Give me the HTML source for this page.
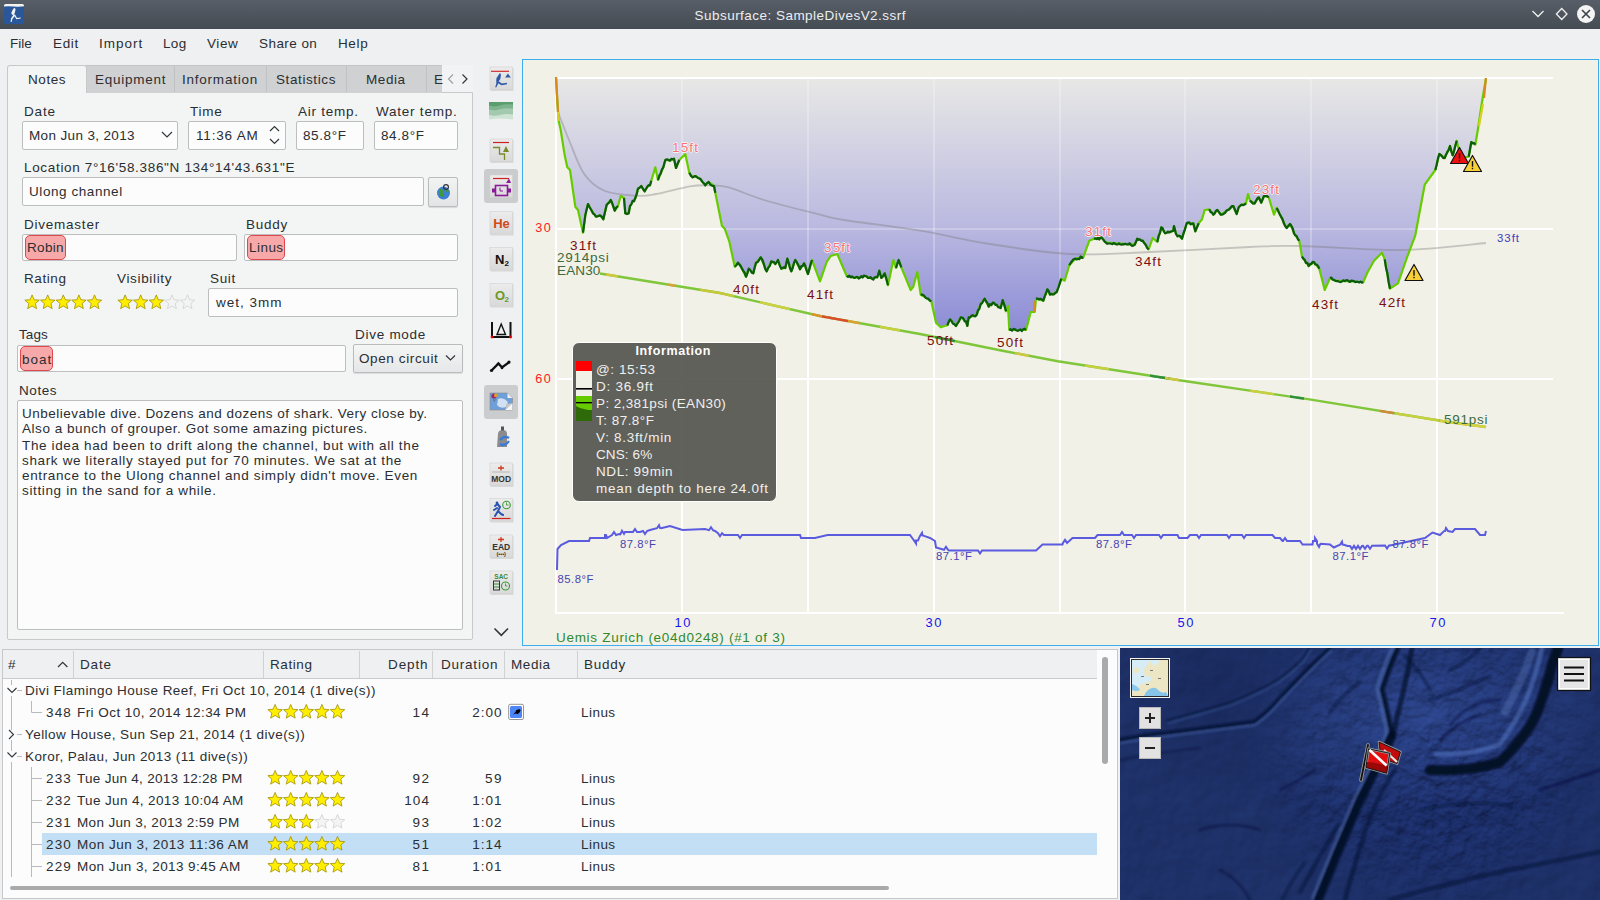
<!DOCTYPE html>
<html><head><meta charset="utf-8">
<style>
html,body{margin:0;padding:0;}
body{width:1600px;height:900px;overflow:hidden;position:relative;background:#eff0f1;font-family:"Liberation Sans",sans-serif;}
.t{position:absolute;white-space:nowrap;line-height:1;}
.b{position:absolute;box-sizing:border-box;}
svg{position:absolute;}
</style></head><body>
<div class="b" style="left:0px;top:0px;width:1600px;height:29px;background:linear-gradient(#575e67,#454b53);"></div>
<svg style="left:3px;top:3px" width="22" height="22" viewBox="3 3 22 22">
<rect x="4" y="4" width="20" height="20" rx="1.5" fill="#2a5799"/>
<path d="M4 5.5 Q4 4 5.5 4 H22.5 Q24 4 24 5.5 V6.2 Q20 7 14 6.5 Q8 6 4 6.5Z" fill="#f2f2ee"/>
<path d="M14.2 8 Q15.6 8 15.5 9.6 L15 12 Q14.5 14 13.5 15 L12.2 14.8 Q11 14 11.5 12.5 Q12.5 10 13.6 8.6Z" fill="#f4f4f4"/>
<path d="M13.6 14.6 L11 18.5 L10.6 22 L11.6 22 L12.4 19 L14.6 16.2 L16.4 19.3 L20.8 18.6 L20.6 17.6 L17 18 L15 14.6Z" fill="#f4f4f4"/>
</svg><div class="t" style="left:800.00px;top:8.57px;font-size:13.5px;color:#eceeef;letter-spacing:0.468px;transform:translateX(calc(-50% + 0.23px));">Subsurface: SampleDivesV2.ssrf</div>
<svg style="left:1525px;top:2px" width="75" height="26" viewBox="1525 2 75 26">
<path d="M1532.5 11 L1538 16.5 L1543.5 11" stroke="#f0f0f0" stroke-width="1.3" fill="none"/>
<path d="M1561.7 8.5 L1567 14 L1561.7 19.5 L1556.4 14 Z" stroke="#f0f0f0" stroke-width="1.3" fill="none"/>
<circle cx="1586" cy="14" r="9" fill="#f4f4f4"/>
<path d="M1582 10 L1590 18 M1590 10 L1582 18" stroke="#3a4048" stroke-width="1.6"/>
</svg><div class="t" style="left:10.00px;top:36.57px;font-size:13.5px;color:#2a2e32;letter-spacing:0.0px;">File</div>
<div class="t" style="left:53.00px;top:36.57px;font-size:13.5px;color:#2a2e32;letter-spacing:0.638px;">Edit</div>
<div class="t" style="left:99.00px;top:36.57px;font-size:13.5px;color:#2a2e32;letter-spacing:0.978px;">Import</div>
<div class="t" style="left:163.00px;top:36.57px;font-size:13.5px;color:#2a2e32;letter-spacing:0.351px;">Log</div>
<div class="t" style="left:207.00px;top:36.57px;font-size:13.5px;color:#2a2e32;letter-spacing:0.611px;">View</div>
<div class="t" style="left:259.00px;top:36.57px;font-size:13.5px;color:#2a2e32;letter-spacing:0.436px;">Share on</div>
<div class="t" style="left:338.00px;top:36.57px;font-size:13.5px;color:#2a2e32;letter-spacing:0.625px;">Help</div>
<div class="b" style="left:7px;top:92px;width:466px;height:548px;background:#f3f4f4;border:1px solid #c6c8c9;border-radius:0 0 2px 2px;"></div>
<div class="b" style="left:86px;top:65px;width:356px;height:28px;background:#d0d1d3;border-top:1px solid #c2c4c6;"></div>
<div class="b" style="left:174px;top:66px;width:1px;height:26px;background:#bfc1c3;"></div>
<div class="b" style="left:266px;top:66px;width:1px;height:26px;background:#bfc1c3;"></div>
<div class="b" style="left:346px;top:66px;width:1px;height:26px;background:#bfc1c3;"></div>
<div class="b" style="left:426px;top:66px;width:1px;height:26px;background:#bfc1c3;"></div>
<div class="b" style="left:442px;top:65px;width:31px;height:27px;background:#f2f3f4;"></div>
<div class="b" style="left:7px;top:65px;width:80px;height:28px;background:#f3f4f4;border:1px solid #c6c8c9;border-bottom:none;border-radius:3px 3px 0 0;"></div>
<div class="t" style="left:28.00px;top:72.57px;font-size:13.5px;color:#2a2e32;letter-spacing:0.571px;">Notes</div>
<div class="t" style="left:95.00px;top:72.57px;font-size:13.5px;color:#2a2e32;letter-spacing:0.754px;">Equipment</div>
<div class="t" style="left:182.00px;top:72.57px;font-size:13.5px;color:#2a2e32;letter-spacing:0.772px;">Information</div>
<div class="t" style="left:276.00px;top:72.57px;font-size:13.5px;color:#2a2e32;letter-spacing:0.601px;">Statistics</div>
<div class="t" style="left:366.00px;top:72.57px;font-size:13.5px;color:#2a2e32;letter-spacing:0.57px;">Media</div>
<div class="t" style="left:434.00px;top:72.57px;font-size:13.5px;color:#2a2e32;letter-spacing:-0.791px;">E</div>
<svg style="left:440px;top:68px" width="32" height="22" viewBox="440 68 32 22">
<path d="M453 74.5 L448.5 79 L453 83.5" stroke="#9ea1a4" stroke-width="1.2" fill="none"/>
<path d="M462.5 74.5 L467 79 L462.5 83.5" stroke="#31363b" stroke-width="1.2" fill="none"/>
</svg><div class="t" style="left:24.00px;top:104.57px;font-size:13.5px;color:#2a2e32;letter-spacing:0.852px;">Date</div>
<div class="t" style="left:190.00px;top:104.57px;font-size:13.5px;color:#2a2e32;letter-spacing:0.772px;">Time</div>
<div class="t" style="left:298.00px;top:104.57px;font-size:13.5px;color:#2a2e32;letter-spacing:0.764px;">Air temp.</div>
<div class="t" style="left:376.00px;top:104.57px;font-size:13.5px;color:#2a2e32;letter-spacing:0.769px;">Water temp.</div>
<div class="b" style="left:22px;top:121px;width:156px;height:29px;background:#fcfcfc;border:1px solid #bcbebf;border-radius:2px;"></div>
<div class="t" style="left:29.00px;top:128.57px;font-size:13.5px;color:#2a2e32;letter-spacing:0.36px;">Mon Jun 3, 2013</div>
<svg style="left:160px;top:128px" width="14" height="12" viewBox="160 128 14 12"><path d="M162 132 L167 137 L172 132" stroke="#31363b" stroke-width="1.2" fill="none"/></svg><div class="b" style="left:188px;top:121px;width:98px;height:29px;background:#fcfcfc;border:1px solid #bcbebf;border-radius:2px;"></div>
<div class="t" style="left:196.00px;top:128.57px;font-size:13.5px;color:#2a2e32;letter-spacing:0.81px;">11:36 AM</div>
<svg style="left:266px;top:124px" width="16" height="24" viewBox="266 124 16 24"><path d="M270 131 L274.5 126.5 L279 131 M270 139 L274.5 143.5 L279 139" stroke="#31363b" stroke-width="1.2" fill="none"/></svg><div class="b" style="left:296px;top:121px;width:68px;height:29px;background:#fcfcfc;border:1px solid #bcbebf;border-radius:2px;"></div>
<div class="t" style="left:303.00px;top:128.57px;font-size:13.5px;color:#2a2e32;letter-spacing:0.601px;">85.8°F</div>
<div class="b" style="left:374px;top:121px;width:84px;height:29px;background:#fcfcfc;border:1px solid #bcbebf;border-radius:2px;"></div>
<div class="t" style="left:381.00px;top:128.57px;font-size:13.5px;color:#2a2e32;letter-spacing:0.601px;">84.8°F</div>
<div class="t" style="left:24.00px;top:160.57px;font-size:13.5px;color:#2a2e32;letter-spacing:0.675px;">Location 7°16'58.386"N 134°14'43.631"E</div>
<div class="b" style="left:22px;top:177px;width:402px;height:29px;background:#fcfcfc;border:1px solid #bcbebf;border-radius:2px;"></div>
<div class="t" style="left:29.00px;top:184.57px;font-size:13.5px;color:#2a2e32;letter-spacing:0.57px;">Ulong channel</div>
<div class="b" style="left:428px;top:177px;width:30px;height:30px;background:linear-gradient(#f2f3f3,#e3e4e5);border:1px solid #b9bbbd;border-radius:2px;box-shadow:0 1px 1px rgba(0,0,0,0.12);"></div>
<svg style="left:434px;top:181px" width="20" height="22" viewBox="0 0 20 22">
<circle cx="9.5" cy="12" r="6.5" fill="#3d7fd0"/><path d="M5 8 Q8 7 9 10 Q8 13 10 15 Q7 17 5 14 Z M11 8 Q14 8 15 11 Q13 12 12 10Z" fill="#3f9a2f"/>
<circle cx="12" cy="6" r="2.4" fill="none" stroke="#333" stroke-width="1.2"/></svg><div class="t" style="left:24.00px;top:217.57px;font-size:13.5px;color:#2a2e32;letter-spacing:0.766px;">Divemaster</div>
<div class="t" style="left:246.00px;top:217.57px;font-size:13.5px;color:#2a2e32;letter-spacing:0.77px;">Buddy</div>
<div class="b" style="left:22px;top:234px;width:215px;height:27px;background:#fcfcfc;border:1px solid #bcbebf;border-radius:2px;"></div>
<div class="b" style="left:244px;top:234px;width:214px;height:27px;background:#fcfcfc;border:1px solid #bcbebf;border-radius:2px;"></div>
<div class="b" style="left:25px;top:235px;width:41px;height:25px;background:#f7a9a9;border:1px solid #e0474c;border-radius:5px;"></div>
<div class="t" style="left:27.00px;top:240.57px;font-size:13.5px;color:#2a2e32;letter-spacing:0.309px;">Robin</div>
<div class="b" style="left:247px;top:235px;width:38px;height:25px;background:#f7a9a9;border:1px solid #e0474c;border-radius:5px;"></div>
<div class="t" style="left:249.00px;top:240.57px;font-size:13.5px;color:#2a2e32;letter-spacing:0.458px;">Linus</div>
<div class="t" style="left:24.00px;top:271.57px;font-size:13.5px;color:#2a2e32;letter-spacing:0.578px;">Rating</div>
<div class="t" style="left:117.00px;top:271.57px;font-size:13.5px;color:#2a2e32;letter-spacing:0.663px;">Visibility</div>
<div class="t" style="left:210.00px;top:271.57px;font-size:13.5px;color:#2a2e32;letter-spacing:0.646px;">Suit</div>
<div class="b" style="left:208px;top:288px;width:250px;height:29px;background:#fcfcfc;border:1px solid #bcbebf;border-radius:2px;"></div>
<div class="t" style="left:216.00px;top:295.57px;font-size:13.5px;color:#2a2e32;letter-spacing:1.012px;">wet, 3mm</div>
<div class="t" style="left:19.00px;top:327.57px;font-size:13.5px;color:#2a2e32;letter-spacing:0.089px;">Tags</div>
<div class="t" style="left:355.00px;top:327.57px;font-size:13.5px;color:#2a2e32;letter-spacing:0.724px;">Dive mode</div>
<div class="b" style="left:17px;top:345px;width:329px;height:27px;background:#fcfcfc;border:1px solid #bcbebf;border-radius:2px;"></div>
<div class="b" style="left:20px;top:346px;width:33px;height:25px;background:#f7a9a9;border:1px solid #e0474c;border-radius:5px;"></div>
<div class="t" style="left:22.00px;top:352.57px;font-size:13.5px;color:#2a2e32;letter-spacing:0.999px;">boat</div>
<div class="b" style="left:353px;top:344px;width:110px;height:29px;background:linear-gradient(#f4f5f5,#e6e7e8);border:1px solid #b9bbbd;border-radius:2px;box-shadow:0 1px 1px rgba(0,0,0,0.1);"></div>
<div class="t" style="left:359.00px;top:351.57px;font-size:13.5px;color:#2a2e32;letter-spacing:0.613px;">Open circuit</div>
<svg style="left:440px;top:350px" width="16" height="16" viewBox="440 350 16 16"><path d="M446 355.5 L450.5 360 L455 355.5" stroke="#31363b" stroke-width="1.2" fill="none"/></svg><div class="t" style="left:19.00px;top:383.57px;font-size:13.5px;color:#2a2e32;letter-spacing:0.571px;">Notes</div>
<div class="b" style="left:17px;top:400px;width:446px;height:230px;background:#fcfcfc;border:1px solid #bcbebf;border-radius:2px;"></div>
<div class="t" style="left:22.00px;top:406.57px;font-size:13.5px;color:#2a2e32;letter-spacing:0.49px;">Unbelievable dive. Dozens and dozens of shark. Very close by.</div>
<div class="t" style="left:22.00px;top:421.57px;font-size:13.5px;color:#2a2e32;letter-spacing:0.543px;">Also a bunch of grouper. Got some amazing pictures.</div>
<div class="t" style="left:22.00px;top:438.57px;font-size:13.5px;color:#2a2e32;letter-spacing:0.638px;">The idea had been to drift along the channel, but with all the</div>
<div class="t" style="left:22.00px;top:453.57px;font-size:13.5px;color:#2a2e32;letter-spacing:0.646px;">shark we literally stayed put for 70 minutes. We sat at the</div>
<div class="t" style="left:22.00px;top:468.57px;font-size:13.5px;color:#2a2e32;letter-spacing:0.636px;">entrance to the Ulong channel and simply didn't move. Even</div>
<div class="t" style="left:22.00px;top:483.57px;font-size:13.5px;color:#2a2e32;letter-spacing:0.641px;">sitting in the sand for a while.</div>
<svg style="left:0;top:0" width="1600" height="900" viewBox="0 0 1600 900"><path d="M32.10 294.90 L34.11 299.73 L39.33 300.15 L35.35 303.56 L36.57 308.65 L32.10 305.92 L27.63 308.65 L28.85 303.56 L24.87 300.15 L30.09 299.73Z" fill="#ffee00" stroke="#a09000" stroke-width="0.8"/><path d="M47.70 294.90 L49.71 299.73 L54.93 300.15 L50.95 303.56 L52.17 308.65 L47.70 305.92 L43.23 308.65 L44.45 303.56 L40.47 300.15 L45.69 299.73Z" fill="#ffee00" stroke="#a09000" stroke-width="0.8"/><path d="M63.30 294.90 L65.31 299.73 L70.53 300.15 L66.55 303.56 L67.77 308.65 L63.30 305.92 L58.83 308.65 L60.05 303.56 L56.07 300.15 L61.29 299.73Z" fill="#ffee00" stroke="#a09000" stroke-width="0.8"/><path d="M78.90 294.90 L80.91 299.73 L86.13 300.15 L82.15 303.56 L83.37 308.65 L78.90 305.92 L74.43 308.65 L75.65 303.56 L71.67 300.15 L76.89 299.73Z" fill="#ffee00" stroke="#a09000" stroke-width="0.8"/><path d="M94.50 294.90 L96.51 299.73 L101.73 300.15 L97.75 303.56 L98.97 308.65 L94.50 305.92 L90.03 308.65 L91.25 303.56 L87.27 300.15 L92.49 299.73Z" fill="#ffee00" stroke="#a09000" stroke-width="0.8"/><path d="M125.10 294.90 L127.11 299.73 L132.33 300.15 L128.35 303.56 L129.57 308.65 L125.10 305.92 L120.63 308.65 L121.85 303.56 L117.87 300.15 L123.09 299.73Z" fill="#ffee00" stroke="#a09000" stroke-width="0.8"/><path d="M140.70 294.90 L142.71 299.73 L147.93 300.15 L143.95 303.56 L145.17 308.65 L140.70 305.92 L136.23 308.65 L137.45 303.56 L133.47 300.15 L138.69 299.73Z" fill="#ffee00" stroke="#a09000" stroke-width="0.8"/><path d="M156.30 294.90 L158.31 299.73 L163.53 300.15 L159.55 303.56 L160.77 308.65 L156.30 305.92 L151.83 308.65 L153.05 303.56 L149.07 300.15 L154.29 299.73Z" fill="#ffee00" stroke="#a09000" stroke-width="0.8"/><path d="M171.90 294.90 L173.91 299.73 L179.13 300.15 L175.15 303.56 L176.37 308.65 L171.90 305.92 L167.43 308.65 L168.65 303.56 L164.67 300.15 L169.89 299.73Z" fill="#f4f4f4" stroke="#d0d0d0" stroke-width="0.8"/><path d="M187.50 294.90 L189.51 299.73 L194.73 300.15 L190.75 303.56 L191.97 308.65 L187.50 305.92 L183.03 308.65 L184.25 303.56 L180.27 300.15 L185.49 299.73Z" fill="#f4f4f4" stroke="#d0d0d0" stroke-width="0.8"/></svg>
<svg style="left:0;top:0" width="1600" height="900" viewBox="0 0 1600 900"><defs><linearGradient id="dg" gradientUnits="userSpaceOnUse" x1="0" y1="77" x2="0" y2="330"><stop offset="0" stop-color="#e8e8e6"/><stop offset="0.6" stop-color="#b9b8e0"/><stop offset="1" stop-color="#8c8cd6"/></linearGradient></defs><rect x="522.5" y="59.5" width="1076" height="586" fill="#f2f1e7" stroke="#3daee9" stroke-width="1"/><line x1="556" y1="77" x2="556" y2="613" stroke="#ffffff" stroke-width="2"/><line x1="682" y1="77" x2="682" y2="613" stroke="#ffffff" stroke-width="2"/><line x1="808" y1="77" x2="808" y2="613" stroke="#ffffff" stroke-width="2"/><line x1="934" y1="77" x2="934" y2="613" stroke="#ffffff" stroke-width="2"/><line x1="1060" y1="77" x2="1060" y2="613" stroke="#ffffff" stroke-width="2"/><line x1="1185" y1="77" x2="1185" y2="613" stroke="#ffffff" stroke-width="2"/><line x1="1311" y1="77" x2="1311" y2="613" stroke="#ffffff" stroke-width="2"/><line x1="1437" y1="77" x2="1437" y2="613" stroke="#ffffff" stroke-width="2"/><line x1="556" y1="229" x2="1553" y2="229" stroke="#ffffff" stroke-width="2"/><line x1="556" y1="379" x2="1553" y2="379" stroke="#ffffff" stroke-width="2"/><line x1="555" y1="613" x2="1564" y2="613" stroke="#ffffff" stroke-width="2"/><polygon points="556.0,77.0 557.0,95.0 558.0,112.0 558.7,121.0 560.7,130.0 564.7,155.3 567.3,167.3 570.0,170.0 575.3,206.7 578.0,210.0 583.0,232.7 585.3,215.3 588.0,204.0 591.3,210.0 596.0,216.7 600.0,215.3 603.3,219.3 606.7,204.7 610.7,200.0 614.7,210.7 618.0,206.0 620.7,196.0 624.0,198.0 625.3,213.3 628.7,213.3 630.0,206.0 635.3,198.0 638.0,188.7 641.3,186.0 644.7,191.3 647.3,186.7 650.0,185.3 651.3,180.7 655.3,167.3 658.0,180.0 663.3,167.3 665.3,160.0 670.0,160.7 674.0,158.7 676.0,168.0 679.3,160.0 685.3,154.0 689.3,172.7 692.7,177.3 695.3,176.0 700.7,179.3 705.3,185.3 708.7,182.0 714.0,186.0 715.3,192.7 722.0,226.0 724.7,228.7 729.3,241.3 734.7,266.7 738.0,262.7 742.0,268.7 746.0,276.7 748.7,268.7 753.3,273.3 756.0,262.7 760.7,257.3 766.7,271.3 771.3,261.3 775.3,264.0 778.0,260.0 781.3,268.7 785.3,268.0 787.3,258.7 791.3,271.3 795.3,260.0 800.0,269.3 804.0,263.3 808.0,274.0 812.0,260.0 820.0,281.3 826.7,262.0 830.7,256.0 837.3,254.0 846.7,276.0 854.7,278.0 865.3,276.0 872.0,278.7 877.3,277.3 879.3,270.7 881.3,278.0 884.7,273.3 888.0,285.3 893.3,260.0 896.0,268.0 898.7,260.0 901.3,267.3 910.7,290.0 913.3,286.7 917.3,272.0 920.7,294.7 925.3,297.3 931.3,301.3 936.0,322.7 940.7,327.3 947.3,325.3 950.0,319.3 956.0,326.0 960.7,317.3 966.0,321.3 967.3,326.0 968.7,317.3 976.7,314.7 980.7,304.0 984.7,298.7 988.7,306.7 992.7,302.7 1000.7,308.0 1002.7,300.0 1006.0,311.3 1008.0,306.0 1009.3,330.0 1026.0,330.0 1028.0,322.7 1030.7,312.0 1034.7,312.0 1036.0,298.7 1043.3,300.7 1047.3,289.3 1050.0,294.7 1056.7,292.0 1061.3,278.7 1064.7,280.7 1069.3,265.3 1075.3,258.7 1083.3,257.3 1089.3,240.7 1094.0,238.7 1102.0,238.0 1106.0,242.7 1134.7,244.7 1137.3,238.7 1142.7,240.7 1148.7,249.3 1152.7,238.0 1157.3,242.0 1161.3,227.3 1165.3,233.3 1173.3,230.7 1174.0,226.0 1176.0,234.0 1182.0,238.7 1186.7,223.3 1193.3,223.3 1195.3,231.3 1198.7,223.3 1202.0,219.3 1204.7,210.0 1209.3,209.3 1213.3,214.7 1217.3,210.0 1220.7,214.7 1228.0,210.0 1233.3,206.0 1236.7,214.0 1238.7,207.3 1241.3,204.7 1246.0,203.3 1248.0,194.0 1250.0,200.7 1254.7,203.3 1258.7,197.3 1261.3,202.7 1264.0,196.0 1268.7,197.3 1274.0,214.7 1276.7,208.0 1286.7,228.0 1290.0,224.0 1295.3,235.3 1299.3,240.7 1302.0,256.7 1308.7,266.0 1314.0,262.0 1319.3,268.7 1324.7,290.0 1330.0,278.0 1335.3,280.7 1363.3,282.0 1367.3,272.7 1374.0,260.7 1382.0,252.7 1384.7,259.3 1390.0,288.7 1398.0,283.3 1407.3,256.7 1415.3,235.3 1424.7,184.7 1435.3,170.0 1439.3,154.0 1444.7,158.0 1450.0,146.0 1452.7,155.3 1456.7,140.7 1460.7,158.0 1468.7,156.7 1471.3,142.0 1475.3,144.7 1478.0,128.7 1482.0,102.0 1486.0,78.0 1486.0,79.0 556.0,79.0" fill="url(#dg)"/><line x1="555" y1="78" x2="1553" y2="78" stroke="#ffffff" stroke-width="2"/><line x1="682" y1="77" x2="682" y2="340" stroke="#ffffff" stroke-opacity="0.25" stroke-width="2"/><line x1="808" y1="77" x2="808" y2="340" stroke="#ffffff" stroke-opacity="0.25" stroke-width="2"/><line x1="934" y1="77" x2="934" y2="340" stroke="#ffffff" stroke-opacity="0.25" stroke-width="2"/><line x1="1060" y1="77" x2="1060" y2="340" stroke="#ffffff" stroke-opacity="0.25" stroke-width="2"/><line x1="1185" y1="77" x2="1185" y2="340" stroke="#ffffff" stroke-opacity="0.25" stroke-width="2"/><line x1="1311" y1="77" x2="1311" y2="340" stroke="#ffffff" stroke-opacity="0.25" stroke-width="2"/><line x1="1437" y1="77" x2="1437" y2="340" stroke="#ffffff" stroke-opacity="0.25" stroke-width="2"/><line x1="556" y1="229" x2="1490" y2="229" stroke="#ffffff" stroke-opacity="0.25" stroke-width="2"/><clipPath id="below"><polygon points="556.0,77.0 557.0,95.0 558.0,112.0 558.7,121.0 560.7,130.0 564.7,155.3 567.3,167.3 570.0,170.0 575.3,206.7 578.0,210.0 583.0,232.7 585.3,215.3 588.0,204.0 591.3,210.0 596.0,216.7 600.0,215.3 603.3,219.3 606.7,204.7 610.7,200.0 614.7,210.7 618.0,206.0 620.7,196.0 624.0,198.0 625.3,213.3 628.7,213.3 630.0,206.0 635.3,198.0 638.0,188.7 641.3,186.0 644.7,191.3 647.3,186.7 650.0,185.3 651.3,180.7 655.3,167.3 658.0,180.0 663.3,167.3 665.3,160.0 670.0,160.7 674.0,158.7 676.0,168.0 679.3,160.0 685.3,154.0 689.3,172.7 692.7,177.3 695.3,176.0 700.7,179.3 705.3,185.3 708.7,182.0 714.0,186.0 715.3,192.7 722.0,226.0 724.7,228.7 729.3,241.3 734.7,266.7 738.0,262.7 742.0,268.7 746.0,276.7 748.7,268.7 753.3,273.3 756.0,262.7 760.7,257.3 766.7,271.3 771.3,261.3 775.3,264.0 778.0,260.0 781.3,268.7 785.3,268.0 787.3,258.7 791.3,271.3 795.3,260.0 800.0,269.3 804.0,263.3 808.0,274.0 812.0,260.0 820.0,281.3 826.7,262.0 830.7,256.0 837.3,254.0 846.7,276.0 854.7,278.0 865.3,276.0 872.0,278.7 877.3,277.3 879.3,270.7 881.3,278.0 884.7,273.3 888.0,285.3 893.3,260.0 896.0,268.0 898.7,260.0 901.3,267.3 910.7,290.0 913.3,286.7 917.3,272.0 920.7,294.7 925.3,297.3 931.3,301.3 936.0,322.7 940.7,327.3 947.3,325.3 950.0,319.3 956.0,326.0 960.7,317.3 966.0,321.3 967.3,326.0 968.7,317.3 976.7,314.7 980.7,304.0 984.7,298.7 988.7,306.7 992.7,302.7 1000.7,308.0 1002.7,300.0 1006.0,311.3 1008.0,306.0 1009.3,330.0 1026.0,330.0 1028.0,322.7 1030.7,312.0 1034.7,312.0 1036.0,298.7 1043.3,300.7 1047.3,289.3 1050.0,294.7 1056.7,292.0 1061.3,278.7 1064.7,280.7 1069.3,265.3 1075.3,258.7 1083.3,257.3 1089.3,240.7 1094.0,238.7 1102.0,238.0 1106.0,242.7 1134.7,244.7 1137.3,238.7 1142.7,240.7 1148.7,249.3 1152.7,238.0 1157.3,242.0 1161.3,227.3 1165.3,233.3 1173.3,230.7 1174.0,226.0 1176.0,234.0 1182.0,238.7 1186.7,223.3 1193.3,223.3 1195.3,231.3 1198.7,223.3 1202.0,219.3 1204.7,210.0 1209.3,209.3 1213.3,214.7 1217.3,210.0 1220.7,214.7 1228.0,210.0 1233.3,206.0 1236.7,214.0 1238.7,207.3 1241.3,204.7 1246.0,203.3 1248.0,194.0 1250.0,200.7 1254.7,203.3 1258.7,197.3 1261.3,202.7 1264.0,196.0 1268.7,197.3 1274.0,214.7 1276.7,208.0 1286.7,228.0 1290.0,224.0 1295.3,235.3 1299.3,240.7 1302.0,256.7 1308.7,266.0 1314.0,262.0 1319.3,268.7 1324.7,290.0 1330.0,278.0 1335.3,280.7 1363.3,282.0 1367.3,272.7 1374.0,260.7 1382.0,252.7 1384.7,259.3 1390.0,288.7 1398.0,283.3 1407.3,256.7 1415.3,235.3 1424.7,184.7 1435.3,170.0 1439.3,154.0 1444.7,158.0 1450.0,146.0 1452.7,155.3 1456.7,140.7 1460.7,158.0 1468.7,156.7 1471.3,142.0 1475.3,144.7 1478.0,128.7 1482.0,102.0 1486.0,78.0 1486.0,640.0 556.0,640.0"/></clipPath><g clip-path="url(#below)"><line x1="682" y1="77" x2="682" y2="613" stroke="#ffffff" stroke-width="2"/><line x1="808" y1="77" x2="808" y2="613" stroke="#ffffff" stroke-width="2"/><line x1="934" y1="77" x2="934" y2="613" stroke="#ffffff" stroke-width="2"/><line x1="1060" y1="77" x2="1060" y2="613" stroke="#ffffff" stroke-width="2"/><line x1="1185" y1="77" x2="1185" y2="613" stroke="#ffffff" stroke-width="2"/><line x1="1311" y1="77" x2="1311" y2="613" stroke="#ffffff" stroke-width="2"/><line x1="1437" y1="77" x2="1437" y2="613" stroke="#ffffff" stroke-width="2"/><line x1="556" y1="229" x2="1553" y2="229" stroke="#ffffff" stroke-width="2"/></g><path d="M557.8 111.7 C559.7 116.4 564.6 129.6 569.0 140.0 C573.4 150.4 578.2 165.5 584.2 174.0 C590.2 182.5 596.2 187.4 605.0 191.0 C613.8 194.6 628.5 195.2 637.0 195.7 C645.5 196.2 647.2 195.6 656.0 194.0 C664.8 192.4 681.2 187.8 690.0 186.3 C698.8 184.9 702.7 185.2 709.0 185.3 C715.3 185.5 718.4 184.7 727.8 187.2 C737.2 189.7 750.2 195.9 765.6 200.5 C781.0 205.1 806.9 211.3 820.0 214.6 C833.1 217.8 827.3 217.3 844.0 220.0 C860.7 222.7 895.7 226.7 920.0 230.7 C944.3 234.7 965.0 240.1 990.0 244.0 C1015.0 247.9 1043.3 252.7 1070.0 254.0 C1096.7 255.3 1120.0 253.2 1150.0 252.0 C1180.0 250.8 1225.0 248.0 1250.0 247.0 C1275.0 246.0 1275.0 245.5 1300.0 246.0 C1325.0 246.5 1369.0 250.5 1400.0 250.0 C1431.0 249.5 1471.7 244.2 1486.0 243.0" fill="none" stroke="#7a7a7a" stroke-opacity="0.38" stroke-width="1.8"/><polyline points="556.0,77.0 557.0,95.0 558.0,112.0 558.7,121.0 560.7,130.0 564.7,155.3 567.3,167.3 570.0,170.0 575.3,206.7 578.0,210.0 583.0,232.7 585.3,215.3 588.0,204.0 591.3,210.0 596.0,216.7 600.0,215.3 603.3,219.3 606.7,204.7 610.7,200.0 614.7,210.7 618.0,206.0 620.7,196.0 624.0,198.0 625.3,213.3 628.7,213.3 630.0,206.0 635.3,198.0 638.0,188.7 641.3,186.0 644.7,191.3 647.3,186.7 650.0,185.3 651.3,180.7 655.3,167.3 658.0,180.0 663.3,167.3 665.3,160.0 670.0,160.7 674.0,158.7 676.0,168.0 679.3,160.0 685.3,154.0 689.3,172.7 692.7,177.3 695.3,176.0 700.7,179.3 705.3,185.3 708.7,182.0 714.0,186.0 715.3,192.7 722.0,226.0 724.7,228.7 729.3,241.3 734.7,266.7 738.0,262.7 742.0,268.7 746.0,276.7 748.7,268.7 753.3,273.3 756.0,262.7 760.7,257.3 766.7,271.3 771.3,261.3 775.3,264.0 778.0,260.0 781.3,268.7 785.3,268.0 787.3,258.7 791.3,271.3 795.3,260.0 800.0,269.3 804.0,263.3 808.0,274.0 812.0,260.0 820.0,281.3 826.7,262.0 830.7,256.0 837.3,254.0 846.7,276.0 854.7,278.0 865.3,276.0 872.0,278.7 877.3,277.3 879.3,270.7 881.3,278.0 884.7,273.3 888.0,285.3 893.3,260.0 896.0,268.0 898.7,260.0 901.3,267.3 910.7,290.0 913.3,286.7 917.3,272.0 920.7,294.7 925.3,297.3 931.3,301.3 936.0,322.7 940.7,327.3 947.3,325.3 950.0,319.3 956.0,326.0 960.7,317.3 966.0,321.3 967.3,326.0 968.7,317.3 976.7,314.7 980.7,304.0 984.7,298.7 988.7,306.7 992.7,302.7 1000.7,308.0 1002.7,300.0 1006.0,311.3 1008.0,306.0 1009.3,330.0 1026.0,330.0 1028.0,322.7 1030.7,312.0 1034.7,312.0 1036.0,298.7 1043.3,300.7 1047.3,289.3 1050.0,294.7 1056.7,292.0 1061.3,278.7 1064.7,280.7 1069.3,265.3 1075.3,258.7 1083.3,257.3 1089.3,240.7 1094.0,238.7 1102.0,238.0 1106.0,242.7 1134.7,244.7 1137.3,238.7 1142.7,240.7 1148.7,249.3 1152.7,238.0 1157.3,242.0 1161.3,227.3 1165.3,233.3 1173.3,230.7 1174.0,226.0 1176.0,234.0 1182.0,238.7 1186.7,223.3 1193.3,223.3 1195.3,231.3 1198.7,223.3 1202.0,219.3 1204.7,210.0 1209.3,209.3 1213.3,214.7 1217.3,210.0 1220.7,214.7 1228.0,210.0 1233.3,206.0 1236.7,214.0 1238.7,207.3 1241.3,204.7 1246.0,203.3 1248.0,194.0 1250.0,200.7 1254.7,203.3 1258.7,197.3 1261.3,202.7 1264.0,196.0 1268.7,197.3 1274.0,214.7 1276.7,208.0 1286.7,228.0 1290.0,224.0 1295.3,235.3 1299.3,240.7 1302.0,256.7 1308.7,266.0 1314.0,262.0 1319.3,268.7 1324.7,290.0 1330.0,278.0 1335.3,280.7 1363.3,282.0 1367.3,272.7 1374.0,260.7 1382.0,252.7 1384.7,259.3 1390.0,288.7 1398.0,283.3 1407.3,256.7 1415.3,235.3 1424.7,184.7 1435.3,170.0 1439.3,154.0 1444.7,158.0 1450.0,146.0 1452.7,155.3 1456.7,140.7 1460.7,158.0 1468.7,156.7 1471.3,142.0 1475.3,144.7 1478.0,128.7 1482.0,102.0 1486.0,78.0" fill="none" stroke="#66cc00" stroke-width="2.2" stroke-linejoin="round"/><polyline points="583.0,232.7 585.3,215.3 586.6,209.5 588.0,204.0 589.6,207.2 591.3,210.0 592.9,213.3 594.4,214.4 596.0,216.7 597.3,216.3 598.7,216.0 600.0,215.3 601.6,216.5 603.3,219.3 605.0,212.0 606.7,204.7 608.0,203.5 609.4,202.3 610.7,200.0 612.0,202.5 613.4,206.6 614.7,210.7 616.4,207.3 618.0,206.0" fill="none" stroke="#0b5c0b" stroke-width="2.2" stroke-linejoin="round"/><polyline points="624.0,198.0 625.3,213.3 627.0,214.1 628.7,213.3 630.0,206.0 631.3,204.5 632.6,200.8 634.0,201.3 635.3,198.0 636.6,194.6 638.0,188.7 639.6,187.8 641.3,186.0 643.0,189.0 644.7,191.3 647.3,186.7 648.6,185.1 650.0,185.3 651.3,180.7" fill="none" stroke="#0b5c0b" stroke-width="2.2" stroke-linejoin="round"/><polyline points="658.0,180.0 659.3,175.6 660.6,173.7 662.0,169.3 663.3,167.3 665.3,160.0 666.9,159.4 668.4,159.8 670.0,160.7 671.3,158.8 672.7,159.3 674.0,158.7 676.0,168.0 677.6,163.8 679.3,160.0" fill="none" stroke="#0b5c0b" stroke-width="2.2" stroke-linejoin="round"/><polyline points="689.3,172.7 691.0,175.9 692.7,177.3 695.3,176.0 696.6,176.9 698.0,178.0 699.4,178.5 700.7,179.3 702.2,181.7 703.8,183.2 705.3,185.3 707.0,183.1 708.7,182.0 710.0,184.3 711.4,185.3 712.7,185.9 714.0,186.0 715.3,192.7" fill="none" stroke="#0b5c0b" stroke-width="2.2" stroke-linejoin="round"/><polyline points="734.7,266.7 736.4,265.2 738.0,262.7 739.3,264.2 740.7,266.0 742.0,268.7 743.3,270.8 744.7,272.9 746.0,276.7 747.4,273.4 748.7,268.7 750.2,270.0 751.8,272.7 753.3,273.3 754.6,267.7 756.0,262.7 757.6,262.1 759.1,260.0 760.7,257.3 762.2,259.5 763.7,263.5 765.2,268.9 766.7,271.3 768.2,267.9 769.8,265.9 771.3,261.3 772.6,261.9 774.0,262.0 775.3,264.0 776.6,262.3 778.0,260.0 779.6,265.1 781.3,268.7 782.6,267.9 784.0,267.2 785.3,268.0 787.3,258.7 788.6,262.5 790.0,268.3 791.3,271.3 792.6,268.2 794.0,262.8 795.3,260.0 796.9,262.4 798.4,265.2 800.0,269.3 801.3,266.2 802.7,266.1 804.0,263.3 805.3,266.0 806.7,270.6 808.0,274.0 809.3,269.2 810.7,263.9 812.0,260.0" fill="none" stroke="#0b5c0b" stroke-width="2.2" stroke-linejoin="round"/><polyline points="846.7,276.0 848.0,276.9 849.4,275.7 850.7,277.4 852.0,276.3 853.4,277.5 854.7,278.0 856.0,277.0 857.4,276.9 858.7,278.5 860.0,277.8 861.3,276.2 862.6,277.5 864.0,275.5 865.3,276.0 866.6,276.3 868.0,278.0 869.3,278.0 870.7,277.1 872.0,278.7 873.3,279.6 874.6,277.3 876.0,277.0 877.3,277.3 879.3,270.7 881.3,278.0 883.0,276.4 884.7,273.3 886.4,278.9 888.0,285.3" fill="none" stroke="#0b5c0b" stroke-width="2.2" stroke-linejoin="round"/><polyline points="896.0,268.0 897.4,263.5 898.7,260.0 901.3,267.3" fill="none" stroke="#0b5c0b" stroke-width="2.2" stroke-linejoin="round"/><polyline points="920.7,294.7 922.2,294.5 923.8,295.4 925.3,297.3 926.8,298.5 928.3,298.6 929.8,300.6 931.3,301.3" fill="none" stroke="#0b5c0b" stroke-width="2.2" stroke-linejoin="round"/><polyline points="947.3,325.3 948.6,322.0 950.0,319.3 951.5,320.9 953.0,323.8 954.5,324.3 956.0,326.0 957.6,323.3 959.1,321.2 960.7,317.3 962.0,317.5 963.4,318.4 964.7,321.4 966.0,321.3 967.3,326.0 968.7,317.3 970.0,317.7 971.4,315.8 972.7,315.2 974.0,316.2 975.4,316.3 976.7,314.7 978.0,310.3 979.4,308.7 980.7,304.0 982.0,303.2 983.4,300.7 984.7,298.7 986.0,301.2 987.4,303.0 988.7,306.7 990.0,304.2 991.4,305.2 992.7,302.7 994.0,302.9 995.4,305.0 996.7,304.7 998.0,307.1 999.4,307.4 1000.7,308.0 1002.7,300.0 1004.4,305.1 1006.0,311.3" fill="none" stroke="#0b5c0b" stroke-width="2.2" stroke-linejoin="round"/><polyline points="1009.3,330.0 1010.7,329.2 1012.1,330.6 1013.5,328.9 1014.9,329.3 1016.3,330.2 1017.6,330.9 1019.0,330.3 1020.4,329.4 1021.8,331.1 1023.2,329.2 1024.6,328.7 1026.0,330.0" fill="none" stroke="#0b5c0b" stroke-width="2.2" stroke-linejoin="round"/><polyline points="1036.0,298.7 1037.5,298.5 1038.9,299.4 1040.4,298.8 1041.8,299.5 1043.3,300.7 1044.6,296.6 1046.0,293.3 1047.3,289.3 1048.7,291.0 1050.0,294.7 1051.3,293.8 1052.7,294.6 1054.0,294.3 1055.4,292.9 1056.7,292.0 1058.2,288.1 1059.8,283.4 1061.3,278.7" fill="none" stroke="#0b5c0b" stroke-width="2.2" stroke-linejoin="round"/><polyline points="1069.3,265.3 1070.8,262.7 1072.3,260.8 1073.8,259.1 1075.3,258.7 1076.6,259.5 1078.0,258.8 1079.3,259.2 1080.6,256.5 1082.0,257.9 1083.3,257.3" fill="none" stroke="#0b5c0b" stroke-width="2.2" stroke-linejoin="round"/><polyline points="1094.0,238.7 1095.3,238.5 1096.7,239.1 1098.0,237.9 1099.3,239.5 1100.7,237.0 1102.0,238.0 1103.3,239.7 1104.7,241.7 1106.0,242.7 1107.3,243.8 1108.6,243.5 1109.9,243.5 1111.2,243.8 1112.5,244.2 1113.8,242.9 1115.1,243.8 1116.4,244.5 1117.7,244.5 1119.0,243.4 1120.3,244.5 1121.7,244.7 1123.0,244.1 1124.3,244.3 1125.6,243.8 1126.9,244.4 1128.2,244.5 1129.5,243.2 1130.8,244.8 1132.1,245.8 1133.4,245.6 1134.7,244.7 1137.3,238.7 1138.7,239.8 1140.0,239.4 1141.3,240.8 1142.7,240.7 1144.2,243.1 1145.7,244.8 1147.2,248.0 1148.7,249.3" fill="none" stroke="#0b5c0b" stroke-width="2.2" stroke-linejoin="round"/><polyline points="1157.3,242.0 1158.6,236.0 1160.0,232.9 1161.3,227.3 1162.6,228.1 1164.0,231.6 1165.3,233.3 1166.6,232.8 1168.0,231.7 1169.3,232.5 1170.6,231.6 1172.0,231.4 1173.3,230.7 1174.0,226.0 1176.0,234.0 1177.5,236.3 1179.0,235.7 1180.5,236.3 1182.0,238.7 1183.6,233.0 1185.1,228.9 1186.7,223.3 1188.0,222.5 1189.3,222.4 1190.7,224.4 1192.0,223.7 1193.3,223.3 1195.3,231.3 1197.0,227.1 1198.7,223.3" fill="none" stroke="#0b5c0b" stroke-width="2.2" stroke-linejoin="round"/><polyline points="1209.3,209.3 1210.6,212.1 1212.0,212.5 1213.3,214.7 1214.6,213.6 1216.0,210.8 1217.3,210.0 1219.0,212.2 1220.7,214.7 1222.2,214.6 1223.6,213.9 1225.1,212.9 1226.5,210.6 1228.0,210.0 1229.3,209.2 1230.7,207.5 1232.0,206.1 1233.3,206.0 1235.0,210.0 1236.7,214.0 1238.7,207.3 1241.3,204.7 1242.9,205.1 1244.4,204.7 1246.0,203.3" fill="none" stroke="#0b5c0b" stroke-width="2.2" stroke-linejoin="round"/><polyline points="1250.0,200.7 1251.6,202.1 1253.1,203.6 1254.7,203.3 1256.0,200.7 1257.4,198.4 1258.7,197.3 1261.3,202.7 1262.7,199.2 1264.0,196.0 1265.6,195.8 1267.1,196.1 1268.7,197.3" fill="none" stroke="#0b5c0b" stroke-width="2.2" stroke-linejoin="round"/><polyline points="1276.7,208.0 1278.1,210.6 1279.6,214.0 1281.0,216.6 1282.4,218.9 1283.8,223.2 1285.3,226.4 1286.7,228.0 1288.3,225.9 1290.0,224.0 1291.3,225.7 1292.7,228.4 1294.0,233.4 1295.3,235.3 1296.6,235.9 1298.0,239.4 1299.3,240.7" fill="none" stroke="#0b5c0b" stroke-width="2.2" stroke-linejoin="round"/><polyline points="1302.0,256.7 1303.3,258.7 1304.7,259.9 1306.0,263.0 1307.4,262.9 1308.7,266.0 1310.0,264.1 1311.3,263.9 1312.7,261.8 1314.0,262.0 1315.3,264.5 1316.7,264.7 1318.0,266.1 1319.3,268.7" fill="none" stroke="#0b5c0b" stroke-width="2.2" stroke-linejoin="round"/><polyline points="1330.0,278.0 1331.3,277.5 1332.7,279.7 1334.0,279.9 1335.3,280.7 1336.6,281.1 1338.0,281.2 1339.3,281.7 1340.6,282.1 1342.0,281.5 1343.3,280.3 1344.6,281.1 1346.0,280.4 1347.3,280.0 1348.6,281.2 1350.0,281.9 1351.3,280.6 1352.6,280.9 1354.0,281.2 1355.3,282.1 1356.6,281.7 1358.0,282.0 1359.3,282.5 1360.6,281.6 1362.0,282.7 1363.3,282.0" fill="none" stroke="#0b5c0b" stroke-width="2.2" stroke-linejoin="round"/><polyline points="1384.7,259.3 1386.0,267.7 1387.3,272.9 1388.7,282.5 1390.0,288.7" fill="none" stroke="#0b5c0b" stroke-width="2.2" stroke-linejoin="round"/><polyline points="1435.3,170.0 1436.6,165.2 1438.0,158.4 1439.3,154.0 1440.7,154.9 1442.0,156.3 1443.3,158.1 1444.7,158.0 1446.0,154.7 1447.3,152.2 1448.7,150.0 1450.0,146.0 1451.3,151.4 1452.7,155.3 1454.0,151.6 1455.4,145.5 1456.7,140.7" fill="none" stroke="#0b5c0b" stroke-width="2.2" stroke-linejoin="round"/><polyline points="1468.7,156.7 1471.3,142.0 1472.6,143.3 1474.0,143.0 1475.3,144.7" fill="none" stroke="#0b5c0b" stroke-width="2.2" stroke-linejoin="round"/><polyline points="556,77 557,95 558,112" fill="none" stroke="#d88a1c" stroke-width="2.2"/><polyline points="558,112 558.7,121" fill="none" stroke="#d8d020" stroke-width="2.2"/><polyline points="1486,78 1484,98" fill="none" stroke="#d88a1c" stroke-width="2.2"/><polyline points="1034.5,301 1034.7,312" fill="none" stroke="#d88a1c" stroke-width="2.2"/><polyline points="1483,104 1479,126" fill="none" stroke="#d8d020" stroke-width="2.2"/><polyline points="600.0,273.5 720.0,293.0 820.0,316.0 920.0,334.0 1000.0,350.3 1057.8,361.2 1184.4,381.0 1309.4,399.4 1443.8,421.2 1486.0,427.0" fill="none" stroke="#7fc63a" stroke-width="2.4"/><polyline points="606.0,274.5 608.0,274.8 610.0,275.1 612.0,275.4 614.0,275.8 616.0,276.1 618.0,276.4" fill="none" stroke="#d3c83a" stroke-width="2.4"/><polyline points="668.0,284.6 670.0,284.9 672.0,285.2 674.0,285.5 676.0,285.9" fill="none" stroke="#d9a23a" stroke-width="2.4"/><polyline points="700.0,289.8 702.0,290.1 704.0,290.4 706.0,290.7 708.0,291.1 710.0,291.4 712.0,291.7 714.0,292.0 716.0,292.4 718.0,292.7 720.0,293.0 722.0,293.5 724.0,293.9 726.0,294.4 728.0,294.8 730.0,295.3 732.0,295.8 734.0,296.2" fill="none" stroke="#c9c83a" stroke-width="2.4"/><polyline points="760.0,302.2 762.0,302.7 764.0,303.1 766.0,303.6 768.0,304.0 770.0,304.5 772.0,305.0 774.0,305.4 776.0,305.9 778.0,306.3 780.0,306.8 782.0,307.3 784.0,307.7 786.0,308.2 788.0,308.6 790.0,309.1" fill="none" stroke="#cfd040" stroke-width="2.4"/><polyline points="812.0,314.2 814.0,314.6 816.0,315.1 818.0,315.5 820.0,316.0 822.0,316.4" fill="none" stroke="#e0902a" stroke-width="2.4"/><polyline points="822.0,316.4 824.0,316.7 826.0,317.1 828.0,317.4 830.0,317.8 832.0,318.2 834.0,318.5 836.0,318.9 838.0,319.2 840.0,319.6 842.0,320.0 844.0,320.3 846.0,320.7 848.0,321.0" fill="none" stroke="#e04a2a" stroke-width="2.4"/><polyline points="848.0,321.0 850.0,321.4 852.0,321.8 854.0,322.1 856.0,322.5 858.0,322.8 860.0,323.2" fill="none" stroke="#e0a030" stroke-width="2.4"/><polyline points="880.0,326.8 882.0,327.2 884.0,327.5 886.0,327.9 888.0,328.2 890.0,328.6 892.0,329.0 894.0,329.3 896.0,329.7 898.0,330.0 900.0,330.4" fill="none" stroke="#c8d040" stroke-width="2.4"/><polyline points="935.0,337.1 937.0,337.5 939.0,337.9 941.0,338.3 943.0,338.7 945.0,339.1 947.0,339.5 949.0,339.9 951.0,340.3 953.0,340.7 955.0,341.1" fill="none" stroke="#2f8f3a" stroke-width="2.4"/><polyline points="1015.0,353.1 1017.0,353.5 1019.0,353.9 1021.0,354.3 1023.0,354.7 1025.0,355.0 1027.0,355.4 1029.0,355.8" fill="none" stroke="#d0c840" stroke-width="2.4"/><polyline points="1085.0,365.5 1087.0,365.8 1089.0,366.1 1091.0,366.4 1093.0,366.7 1095.0,367.1 1097.0,367.4 1099.0,367.7 1101.0,368.0 1103.0,368.3 1105.0,368.6 1107.0,368.9 1109.0,369.2" fill="none" stroke="#c8d040" stroke-width="2.4"/><polyline points="1150.0,375.6 1152.0,375.9 1154.0,376.3 1156.0,376.6 1158.0,376.9 1160.0,377.2 1162.0,377.5 1164.0,377.8 1166.0,378.1 1168.0,378.4 1170.0,378.8" fill="none" stroke="#2f8f3a" stroke-width="2.4"/><polyline points="1165.0,378.0 1167.0,378.3 1169.0,378.6 1171.0,378.9 1173.0,379.2 1175.0,379.5 1177.0,379.8 1179.0,380.2" fill="none" stroke="#d0c840" stroke-width="2.4"/><polyline points="1250.0,390.7 1252.0,391.0 1254.0,391.2 1256.0,391.5 1258.0,391.8 1260.0,392.1 1262.0,392.4 1264.0,392.7 1266.0,393.0 1268.0,393.3 1270.0,393.6 1272.0,393.9 1274.0,394.2" fill="none" stroke="#c8d040" stroke-width="2.4"/><polyline points="1290.0,396.5 1292.0,396.8 1294.0,397.1 1296.0,397.4 1298.0,397.7 1300.0,398.0 1302.0,398.3 1304.0,398.6" fill="none" stroke="#2f8f3a" stroke-width="2.4"/><polyline points="1380.0,410.9 1382.0,411.2 1384.0,411.5 1386.0,411.9 1388.0,412.2 1390.0,412.5 1392.0,412.8 1394.0,413.2" fill="none" stroke="#d08a3a" stroke-width="2.4"/><polyline points="1395.0,413.3 1397.0,413.6 1399.0,414.0 1401.0,414.3 1403.0,414.6 1405.0,414.9 1407.0,415.3 1409.0,415.6 1411.0,415.9 1413.0,416.2 1415.0,416.6 1417.0,416.9 1419.0,417.2 1421.0,417.6 1423.0,417.9 1425.0,418.2 1427.0,418.5 1429.0,418.9 1431.0,419.2 1433.0,419.5 1435.0,419.8 1437.0,420.2 1439.0,420.5" fill="none" stroke="#c8d040" stroke-width="2.4"/><polyline points="1440,421 1486,427" fill="none" stroke="#d8d040" stroke-width="2.4"/><polyline points="557.0,570.0 557.5,549.0 561.0,545.0 569.0,541.0 589.0,541.0 590.0,538.0 603.0,538.0 605.0,538.0 605.0,535.0 606.0,535.0 607.0,538.0 612.0,535.0 614.0,532.0 616.0,535.0 620.0,533.8 620.0,535.0 622.0,530.8 624.0,533.8 625.0,532.0 633.0,532.0 635.0,529.0 637.0,532.0 640.0,532.0 643.0,531.0 645.0,534.0 647.0,531.0 650.0,530.0 657.0,528.2 659.0,525.2 660.0,528.0 661.0,528.2 670.0,526.0 682.5,530.0 705.0,529.0 709.0,530.2 711.0,527.2 713.0,530.2 715.0,531.0 718.0,533.2 720.0,536.2 722.0,533.2 724.0,535.0 738.0,535.0 740.0,538.0 742.0,535.0 800.0,535.0 801.0,538.0 815.0,538.0 827.5,535.0 910.0,535.0 914.0,540.5 916.0,543.5 916.0,540.5 918.0,540.5 920.0,535.9 922.0,532.9 922.5,535.5 924.0,535.9 930.0,538.0 935.0,541.0 936.0,547.5 944.0,549.8 946.0,546.8 948.0,549.8 949.0,550.5 978.0,550.5 980.0,553.5 982.0,550.5 1036.0,550.5 1042.5,544.5 1062.5,544.5 1063.0,542.9 1065.0,539.9 1067.0,542.9 1072.5,538.0 1095.0,538.0 1097.5,535.0 1120.0,535.0 1122.0,532.0 1124.0,535.0 1132.0,535.0 1134.0,538.0 1136.0,535.0 1159.0,535.0 1161.0,538.0 1163.0,535.0 1177.5,535.0 1179.0,538.0 1187.5,538.0 1190.0,535.0 1197.0,535.0 1199.0,538.0 1201.0,535.0 1227.0,535.0 1229.0,538.0 1231.0,535.0 1242.0,535.0 1244.0,538.0 1246.0,535.0 1272.5,535.0 1275.0,538.0 1280.0,538.0 1282.5,541.0 1283.0,541.0 1285.0,538.0 1287.0,541.0 1300.0,541.0 1302.5,544.5 1312.5,544.5 1313.0,541.0 1315.0,541.0 1315.0,538.0 1317.0,541.0 1317.0,543.8 1319.0,546.8 1320.0,544.5 1321.0,543.8 1330.0,544.5 1333.8,547.5 1340.0,544.7 1342.0,541.7 1342.5,544.5 1344.0,544.7 1347.5,546.0 1350.0,545.9 1352.0,548.9 1354.0,545.9 1354.0,545.9 1356.0,548.9 1358.0,545.9 1358.0,545.9 1360.0,548.9 1362.0,545.9 1363.0,545.8 1365.0,548.8 1367.0,545.8 1368.0,545.7 1370.0,548.7 1372.0,545.7 1385.0,545.5 1387.0,548.5 1389.0,545.5 1390.0,545.5 1425.0,538.0 1432.5,532.5 1440.0,535.0 1444.0,531.1 1445.0,531.0 1446.0,528.1 1448.0,531.1 1452.5,532.0 1455.0,529.0 1475.0,529.0 1480.0,535.0 1485.0,535.0 1486.0,531.0" fill="none" stroke="#5b5be0" stroke-width="2"/><path d="M1459.5 147.5 L1468.5 163.5 L1450.5 163.5 Z" fill="#ee1111" stroke="#111" stroke-width="1.2" stroke-linejoin="round"/><rect x="1458.8" y="153.1" width="1.4" height="5.6" fill="#111"/><rect x="1458.8" y="159.82" width="1.4" height="1.4" fill="#111"/><path d="M1472.5 155.5 L1481.5 171.5 L1463.5 171.5 Z" fill="#f7cf36" stroke="#111" stroke-width="1.2" stroke-linejoin="round"/><rect x="1471.8" y="161.1" width="1.4" height="5.6" fill="#111"/><rect x="1471.8" y="167.82" width="1.4" height="1.4" fill="#111"/><path d="M1414 264.5 L1423.0 280.5 L1405.0 280.5 Z" fill="#f7cf36" stroke="#111" stroke-width="1.2" stroke-linejoin="round"/><rect x="1413.3" y="270.1" width="1.4" height="5.6" fill="#111"/><rect x="1413.3" y="276.82" width="1.4" height="1.4" fill="#111"/></svg>
<div class="t" style="left:543.00px;top:222.27px;font-size:12.67px;color:#ff2020;letter-spacing:1.433px;transform:translateX(calc(-50% + 0.72px));">30</div>
<div class="t" style="left:543.00px;top:373.27px;font-size:12.67px;color:#ff2020;letter-spacing:1.433px;transform:translateX(calc(-50% + 0.72px));">60</div>
<div class="t" style="left:682.50px;top:617.10px;font-size:12.88px;color:#1515f0;letter-spacing:1.454px;transform:translateX(calc(-50% + 0.73px));">10</div>
<div class="t" style="left:933.50px;top:617.10px;font-size:12.88px;color:#1515f0;letter-spacing:1.454px;transform:translateX(calc(-50% + 0.73px));">30</div>
<div class="t" style="left:1185.50px;top:617.10px;font-size:12.88px;color:#1515f0;letter-spacing:1.454px;transform:translateX(calc(-50% + 0.73px));">50</div>
<div class="t" style="left:1437.50px;top:617.10px;font-size:12.88px;color:#1515f0;letter-spacing:1.454px;transform:translateX(calc(-50% + 0.73px));">70</div>
<div class="t" style="left:556.00px;top:630.57px;font-size:13.5px;color:#2f8a2f;letter-spacing:0.704px;">Uemis Zurich (e04d0248) (#1 of 3)</div>
<div class="t" style="left:583.00px;top:238.57px;font-size:13.5px;color:#7a1010;letter-spacing:1.157px;transform:translateX(calc(-50% + 0.58px));">31ft</div>
<div class="t" style="left:746.00px;top:282.57px;font-size:13.5px;color:#7a1010;letter-spacing:1.157px;transform:translateX(calc(-50% + 0.58px));">40ft</div>
<div class="t" style="left:820.00px;top:287.57px;font-size:13.5px;color:#7a1010;letter-spacing:1.157px;transform:translateX(calc(-50% + 0.58px));">41ft</div>
<div class="t" style="left:940.00px;top:333.57px;font-size:13.5px;color:#7a1010;letter-spacing:1.157px;transform:translateX(calc(-50% + 0.58px));">50ft</div>
<div class="t" style="left:1010.00px;top:335.57px;font-size:13.5px;color:#7a1010;letter-spacing:1.157px;transform:translateX(calc(-50% + 0.58px));">50ft</div>
<div class="t" style="left:1148.00px;top:254.57px;font-size:13.5px;color:#7a1010;letter-spacing:1.157px;transform:translateX(calc(-50% + 0.58px));">34ft</div>
<div class="t" style="left:1325.00px;top:297.57px;font-size:13.5px;color:#7a1010;letter-spacing:1.157px;transform:translateX(calc(-50% + 0.58px));">43ft</div>
<div class="t" style="left:1392.00px;top:295.57px;font-size:13.5px;color:#7a1010;letter-spacing:1.157px;transform:translateX(calc(-50% + 0.58px));">42ft</div>
<div class="t" style="left:685.00px;top:140.57px;font-size:13.5px;color:#fa7272;letter-spacing:1.157px;transform:translateX(calc(-50% + 0.58px));text-shadow:1px 0 rgba(255,255,255,.75),-1px 0 rgba(255,255,255,.75),0 1px rgba(255,255,255,.75),0 -1px rgba(255,255,255,.75);">15ft</div>
<div class="t" style="left:837.00px;top:240.57px;font-size:13.5px;color:#fa7272;letter-spacing:1.157px;transform:translateX(calc(-50% + 0.58px));text-shadow:1px 0 rgba(255,255,255,.75),-1px 0 rgba(255,255,255,.75),0 1px rgba(255,255,255,.75),0 -1px rgba(255,255,255,.75);">35ft</div>
<div class="t" style="left:1098.00px;top:224.57px;font-size:13.5px;color:#fa7272;letter-spacing:1.157px;transform:translateX(calc(-50% + 0.58px));text-shadow:1px 0 rgba(255,255,255,.75),-1px 0 rgba(255,255,255,.75),0 1px rgba(255,255,255,.75),0 -1px rgba(255,255,255,.75);">31ft</div>
<div class="t" style="left:1266.00px;top:182.57px;font-size:13.5px;color:#fa7272;letter-spacing:1.157px;transform:translateX(calc(-50% + 0.58px));text-shadow:1px 0 rgba(255,255,255,.75),-1px 0 rgba(255,255,255,.75),0 1px rgba(255,255,255,.75),0 -1px rgba(255,255,255,.75);">23ft</div>
<div class="t" style="left:557.00px;top:250.57px;font-size:13.5px;color:#3d6b3d;letter-spacing:0.739px;">2914psi</div>
<div class="t" style="left:557.00px;top:263.57px;font-size:13.5px;color:#3d6b3d;letter-spacing:0.15px;">EAN30</div>
<div class="t" style="left:1444.00px;top:412.57px;font-size:13.5px;color:#3d6b3d;letter-spacing:0.734px;">591psi</div>
<div class="t" style="left:1497.00px;top:233.33px;font-size:11.42px;color:#4040c0;letter-spacing:0.981px;">33ft</div>
<div class="t" style="left:620.00px;top:539.42px;font-size:11.32px;color:#4545b0;letter-spacing:0.504px;">87.8°F</div>
<div class="t" style="left:557.50px;top:574.42px;font-size:11.32px;color:#4545b0;letter-spacing:0.504px;">85.8°F</div>
<div class="t" style="left:936.00px;top:551.42px;font-size:11.32px;color:#4545b0;letter-spacing:0.504px;">87.1°F</div>
<div class="t" style="left:1096.00px;top:539.42px;font-size:11.32px;color:#4545b0;letter-spacing:0.504px;">87.8°F</div>
<div class="t" style="left:1332.50px;top:551.42px;font-size:11.32px;color:#4545b0;letter-spacing:0.504px;">87.1°F</div>
<div class="t" style="left:1392.50px;top:539.42px;font-size:11.32px;color:#4545b0;letter-spacing:0.504px;">87.8°F</div>
<div class="b" style="left:572px;top:342px;width:205px;height:160px;background:rgba(86,86,80,0.93);border:1.5px solid #fff;border-radius:7px;"></div>
<div class="t" style="left:673.00px;top:345.42px;font-size:12.5px;color:#ffffff;letter-spacing:0.626px;font-weight:bold;transform:translateX(calc(-50% + 0.31px));">Information</div>
<div class="t" style="left:596.00px;top:362.57px;font-size:13.5px;color:#f0f0ee;letter-spacing:0.57px;">@: 15:53</div>
<div class="t" style="left:596.00px;top:379.57px;font-size:13.5px;color:#f0f0ee;letter-spacing:0.736px;">D: 36.9ft</div>
<div class="t" style="left:596.00px;top:396.57px;font-size:13.5px;color:#f0f0ee;letter-spacing:0.378px;">P: 2,381psi (EAN30)</div>
<div class="t" style="left:596.00px;top:413.57px;font-size:13.5px;color:#f0f0ee;letter-spacing:0.472px;">T: 87.8°F</div>
<div class="t" style="left:596.00px;top:430.57px;font-size:13.5px;color:#f0f0ee;letter-spacing:0.689px;">V: 8.3ft/min</div>
<div class="t" style="left:596.00px;top:447.57px;font-size:13.5px;color:#f0f0ee;letter-spacing:0.112px;">CNS: 6%</div>
<div class="t" style="left:596.00px;top:464.57px;font-size:13.5px;color:#f0f0ee;letter-spacing:0.586px;">NDL: 99min</div>
<div class="t" style="left:596.00px;top:481.57px;font-size:13.5px;color:#f0f0ee;letter-spacing:0.724px;">mean depth to here 24.0ft</div>
<svg style="left:576px;top:361px" width="16" height="60" viewBox="0 0 16 60">
<rect x="0" y="0" width="16" height="10" fill="#ff0000"/><rect x="0" y="10" width="16" height="8" fill="#f2f1e7"/>
<rect x="0" y="18" width="16" height="18" fill="#f2f1e7"/><rect x="0" y="27" width="16" height="1.6" fill="#000"/>
<rect x="0" y="35" width="16" height="7" fill="#66cc00"/><rect x="0" y="41" width="16" height="1.6" fill="#000"/>
<rect x="0" y="42.5" width="16" height="7" fill="#66cc00"/><path d="M0 45 L4 47 L8 48 L12 49 L16 49 L16 60 L0 60Z" fill="#2f6a0a"/>
</svg><div class="b" style="left:2px;top:649px;width:1116px;height:250px;background:#fcfcfc;border:1px solid #c6c8c9;"></div>
<div class="b" style="left:3px;top:650px;width:1094px;height:29px;background:#eff0f1;border-bottom:1px solid #c8cacb;"></div>
<div class="b" style="left:73px;top:651px;width:1px;height:27px;background:#cfd1d2;"></div>
<div class="b" style="left:263px;top:651px;width:1px;height:27px;background:#cfd1d2;"></div>
<div class="b" style="left:359px;top:651px;width:1px;height:27px;background:#cfd1d2;"></div>
<div class="b" style="left:432px;top:651px;width:1px;height:27px;background:#cfd1d2;"></div>
<div class="b" style="left:504px;top:651px;width:1px;height:27px;background:#cfd1d2;"></div>
<div class="b" style="left:577px;top:651px;width:1px;height:27px;background:#cfd1d2;"></div>
<div class="t" style="left:8.00px;top:657.57px;font-size:13.5px;color:#2a2e32;letter-spacing:3.386px;">#</div>
<svg style="left:56px;top:658px" width="14" height="12" viewBox="56 658 14 12"><path d="M58 667 L62.7 662.3 L67.4 667" stroke="#31363b" stroke-width="1.2" fill="none"/></svg><div class="t" style="left:80.00px;top:657.57px;font-size:13.5px;color:#2a2e32;letter-spacing:0.852px;">Date</div>
<div class="t" style="left:270.00px;top:657.57px;font-size:13.5px;color:#2a2e32;letter-spacing:0.578px;">Rating</div>
<div class="t" style="left:388.00px;top:657.57px;font-size:13.5px;color:#2a2e32;letter-spacing:0.894px;">Depth</div>
<div class="t" style="left:441.00px;top:657.57px;font-size:13.5px;color:#2a2e32;letter-spacing:0.777px;">Duration</div>
<div class="t" style="left:511.00px;top:657.57px;font-size:13.5px;color:#2a2e32;letter-spacing:0.57px;">Media</div>
<div class="t" style="left:584.00px;top:657.57px;font-size:13.5px;color:#2a2e32;letter-spacing:0.77px;">Buddy</div>
<div class="b" style="left:42px;top:833px;width:1055px;height:22px;background:#c2dff5;"></div>
<div class="t" style="left:25.00px;top:683.57px;font-size:13.5px;color:#2a2e32;letter-spacing:0.468px;">Divi Flamingo House Reef, Fri Oct 10, 2014 (1 dive(s))</div>
<div class="t" style="left:46.00px;top:705.57px;font-size:13.5px;color:#2a2e32;letter-spacing:1.146px;">348</div>
<div class="t" style="left:77.00px;top:705.57px;font-size:13.5px;color:#2a2e32;letter-spacing:0.441px;">Fri Oct 10, 2014 12:34 PM</div>
<div class="t" style="left:429.00px;top:705.57px;font-size:13.5px;color:#2a2e32;letter-spacing:1.528px;transform:translateX(calc(-100% + 1.53px));">14</div>
<div class="t" style="left:501.50px;top:705.57px;font-size:13.5px;color:#2a2e32;letter-spacing:0.974px;transform:translateX(calc(-100% + 0.97px));">2:00</div>
<div class="t" style="left:581.00px;top:705.57px;font-size:13.5px;color:#2a2e32;letter-spacing:0.458px;">Linus</div>
<div class="t" style="left:25.00px;top:727.57px;font-size:13.5px;color:#2a2e32;letter-spacing:0.447px;">Yellow House, Sun Sep 21, 2014 (1 dive(s))</div>
<div class="t" style="left:25.00px;top:749.57px;font-size:13.5px;color:#2a2e32;letter-spacing:0.422px;">Koror, Palau, Jun 2013 (11 dive(s))</div>
<div class="t" style="left:46.00px;top:771.57px;font-size:13.5px;color:#2a2e32;letter-spacing:1.146px;">233</div>
<div class="t" style="left:77.00px;top:771.57px;font-size:13.5px;color:#2a2e32;letter-spacing:0.286px;">Tue Jun 4, 2013 12:28 PM</div>
<div class="t" style="left:429.00px;top:771.57px;font-size:13.5px;color:#2a2e32;letter-spacing:1.528px;transform:translateX(calc(-100% + 1.53px));">92</div>
<div class="t" style="left:501.50px;top:771.57px;font-size:13.5px;color:#2a2e32;letter-spacing:1.528px;transform:translateX(calc(-100% + 1.53px));">59</div>
<div class="t" style="left:581.00px;top:771.57px;font-size:13.5px;color:#2a2e32;letter-spacing:0.458px;">Linus</div>
<div class="t" style="left:46.00px;top:793.57px;font-size:13.5px;color:#2a2e32;letter-spacing:1.146px;">232</div>
<div class="t" style="left:77.00px;top:793.57px;font-size:13.5px;color:#2a2e32;letter-spacing:0.365px;">Tue Jun 4, 2013 10:04 AM</div>
<div class="t" style="left:429.00px;top:793.57px;font-size:13.5px;color:#2a2e32;letter-spacing:1.146px;transform:translateX(calc(-100% + 1.15px));">104</div>
<div class="t" style="left:501.50px;top:793.57px;font-size:13.5px;color:#2a2e32;letter-spacing:0.974px;transform:translateX(calc(-100% + 0.97px));">1:01</div>
<div class="t" style="left:581.00px;top:793.57px;font-size:13.5px;color:#2a2e32;letter-spacing:0.458px;">Linus</div>
<div class="t" style="left:46.00px;top:815.57px;font-size:13.5px;color:#2a2e32;letter-spacing:1.146px;">231</div>
<div class="t" style="left:77.00px;top:815.57px;font-size:13.5px;color:#2a2e32;letter-spacing:0.342px;">Mon Jun 3, 2013 2:59 PM</div>
<div class="t" style="left:429.00px;top:815.57px;font-size:13.5px;color:#2a2e32;letter-spacing:1.528px;transform:translateX(calc(-100% + 1.53px));">93</div>
<div class="t" style="left:501.50px;top:815.57px;font-size:13.5px;color:#2a2e32;letter-spacing:0.974px;transform:translateX(calc(-100% + 0.97px));">1:02</div>
<div class="t" style="left:581.00px;top:815.57px;font-size:13.5px;color:#2a2e32;letter-spacing:0.458px;">Linus</div>
<div class="t" style="left:46.00px;top:837.57px;font-size:13.5px;color:#2a2e32;letter-spacing:1.146px;">230</div>
<div class="t" style="left:77.00px;top:837.57px;font-size:13.5px;color:#2a2e32;letter-spacing:0.482px;">Mon Jun 3, 2013 11:36 AM</div>
<div class="t" style="left:429.00px;top:837.57px;font-size:13.5px;color:#2a2e32;letter-spacing:1.528px;transform:translateX(calc(-100% + 1.53px));">51</div>
<div class="t" style="left:501.50px;top:837.57px;font-size:13.5px;color:#2a2e32;letter-spacing:0.974px;transform:translateX(calc(-100% + 0.97px));">1:14</div>
<div class="t" style="left:581.00px;top:837.57px;font-size:13.5px;color:#2a2e32;letter-spacing:0.458px;">Linus</div>
<div class="t" style="left:46.00px;top:859.57px;font-size:13.5px;color:#2a2e32;letter-spacing:1.146px;">229</div>
<div class="t" style="left:77.00px;top:859.57px;font-size:13.5px;color:#2a2e32;letter-spacing:0.424px;">Mon Jun 3, 2013 9:45 AM</div>
<div class="t" style="left:429.00px;top:859.57px;font-size:13.5px;color:#2a2e32;letter-spacing:1.528px;transform:translateX(calc(-100% + 1.53px));">81</div>
<div class="t" style="left:501.50px;top:859.57px;font-size:13.5px;color:#2a2e32;letter-spacing:0.974px;transform:translateX(calc(-100% + 0.97px));">1:01</div>
<div class="t" style="left:581.00px;top:859.57px;font-size:13.5px;color:#2a2e32;letter-spacing:0.458px;">Linus</div>
<svg style="left:0;top:0" width="1600" height="900" viewBox="0 0 1600 900"><g stroke="#b8babc" stroke-width="1" fill="none"><line x1="11.5" y1="680" x2="11.5" y2="685"/><line x1="11.5" y1="696" x2="11.5" y2="730"/><line x1="17" y1="690.5" x2="22" y2="690.5"/><line x1="17" y1="734.5" x2="22" y2="734.5"/><line x1="17" y1="756.5" x2="22" y2="756.5"/><line x1="11.5" y1="740" x2="11.5" y2="751"/><line x1="11.5" y1="762" x2="11.5" y2="877"/><path d="M31.5 701 V712.5 H42"/><line x1="31.5" y1="767" x2="31.5" y2="877"/><line x1="32" y1="778.5" x2="42" y2="778.5"/><line x1="32" y1="800.5" x2="42" y2="800.5"/><line x1="32" y1="822.5" x2="42" y2="822.5"/><line x1="32" y1="844.5" x2="42" y2="844.5"/><line x1="32" y1="866.5" x2="42" y2="866.5"/></g><g stroke="#31363b" stroke-width="1.1" fill="none"><path d="M7.5 688 L12 692.5 L16.5 688"/><path d="M7.5 752.5 L12 757 L16.5 752.5"/><path d="M9 730 L13.5 734.5 L9 739"/></g><path d="M275.10 704.40 L277.11 709.23 L282.33 709.65 L278.35 713.06 L279.57 718.15 L275.10 715.42 L270.63 718.15 L271.85 713.06 L267.87 709.65 L273.09 709.23Z" fill="#ffee00" stroke="#a09000" stroke-width="0.8"/><path d="M290.70 704.40 L292.71 709.23 L297.93 709.65 L293.95 713.06 L295.17 718.15 L290.70 715.42 L286.23 718.15 L287.45 713.06 L283.47 709.65 L288.69 709.23Z" fill="#ffee00" stroke="#a09000" stroke-width="0.8"/><path d="M306.30 704.40 L308.31 709.23 L313.53 709.65 L309.55 713.06 L310.77 718.15 L306.30 715.42 L301.83 718.15 L303.05 713.06 L299.07 709.65 L304.29 709.23Z" fill="#ffee00" stroke="#a09000" stroke-width="0.8"/><path d="M321.90 704.40 L323.91 709.23 L329.13 709.65 L325.15 713.06 L326.37 718.15 L321.90 715.42 L317.43 718.15 L318.65 713.06 L314.67 709.65 L319.89 709.23Z" fill="#ffee00" stroke="#a09000" stroke-width="0.8"/><path d="M337.50 704.40 L339.51 709.23 L344.73 709.65 L340.75 713.06 L341.97 718.15 L337.50 715.42 L333.03 718.15 L334.25 713.06 L330.27 709.65 L335.49 709.23Z" fill="#ffee00" stroke="#a09000" stroke-width="0.8"/><rect x="508.7" y="704.3" width="14.8" height="15.2" rx="1.5" fill="#ffffff" stroke="#8a8a8a" stroke-width="0.9"/><rect x="510" y="706" width="12" height="12" rx="1.5" fill="#4f86f7"/><path d="M513 714.5 L515.5 712 Q515.5 709.8 518 709.5 Q520.5 709 520.6 710.4 Q519.6 713 517.5 714 L515.5 713.5Z" fill="#000"/><path d="M275.10 770.40 L277.11 775.23 L282.33 775.65 L278.35 779.06 L279.57 784.15 L275.10 781.42 L270.63 784.15 L271.85 779.06 L267.87 775.65 L273.09 775.23Z" fill="#ffee00" stroke="#a09000" stroke-width="0.8"/><path d="M290.70 770.40 L292.71 775.23 L297.93 775.65 L293.95 779.06 L295.17 784.15 L290.70 781.42 L286.23 784.15 L287.45 779.06 L283.47 775.65 L288.69 775.23Z" fill="#ffee00" stroke="#a09000" stroke-width="0.8"/><path d="M306.30 770.40 L308.31 775.23 L313.53 775.65 L309.55 779.06 L310.77 784.15 L306.30 781.42 L301.83 784.15 L303.05 779.06 L299.07 775.65 L304.29 775.23Z" fill="#ffee00" stroke="#a09000" stroke-width="0.8"/><path d="M321.90 770.40 L323.91 775.23 L329.13 775.65 L325.15 779.06 L326.37 784.15 L321.90 781.42 L317.43 784.15 L318.65 779.06 L314.67 775.65 L319.89 775.23Z" fill="#ffee00" stroke="#a09000" stroke-width="0.8"/><path d="M337.50 770.40 L339.51 775.23 L344.73 775.65 L340.75 779.06 L341.97 784.15 L337.50 781.42 L333.03 784.15 L334.25 779.06 L330.27 775.65 L335.49 775.23Z" fill="#ffee00" stroke="#a09000" stroke-width="0.8"/><path d="M275.10 792.40 L277.11 797.23 L282.33 797.65 L278.35 801.06 L279.57 806.15 L275.10 803.42 L270.63 806.15 L271.85 801.06 L267.87 797.65 L273.09 797.23Z" fill="#ffee00" stroke="#a09000" stroke-width="0.8"/><path d="M290.70 792.40 L292.71 797.23 L297.93 797.65 L293.95 801.06 L295.17 806.15 L290.70 803.42 L286.23 806.15 L287.45 801.06 L283.47 797.65 L288.69 797.23Z" fill="#ffee00" stroke="#a09000" stroke-width="0.8"/><path d="M306.30 792.40 L308.31 797.23 L313.53 797.65 L309.55 801.06 L310.77 806.15 L306.30 803.42 L301.83 806.15 L303.05 801.06 L299.07 797.65 L304.29 797.23Z" fill="#ffee00" stroke="#a09000" stroke-width="0.8"/><path d="M321.90 792.40 L323.91 797.23 L329.13 797.65 L325.15 801.06 L326.37 806.15 L321.90 803.42 L317.43 806.15 L318.65 801.06 L314.67 797.65 L319.89 797.23Z" fill="#ffee00" stroke="#a09000" stroke-width="0.8"/><path d="M337.50 792.40 L339.51 797.23 L344.73 797.65 L340.75 801.06 L341.97 806.15 L337.50 803.42 L333.03 806.15 L334.25 801.06 L330.27 797.65 L335.49 797.23Z" fill="#ffee00" stroke="#a09000" stroke-width="0.8"/><path d="M275.10 814.40 L277.11 819.23 L282.33 819.65 L278.35 823.06 L279.57 828.15 L275.10 825.42 L270.63 828.15 L271.85 823.06 L267.87 819.65 L273.09 819.23Z" fill="#ffee00" stroke="#a09000" stroke-width="0.8"/><path d="M290.70 814.40 L292.71 819.23 L297.93 819.65 L293.95 823.06 L295.17 828.15 L290.70 825.42 L286.23 828.15 L287.45 823.06 L283.47 819.65 L288.69 819.23Z" fill="#ffee00" stroke="#a09000" stroke-width="0.8"/><path d="M306.30 814.40 L308.31 819.23 L313.53 819.65 L309.55 823.06 L310.77 828.15 L306.30 825.42 L301.83 828.15 L303.05 823.06 L299.07 819.65 L304.29 819.23Z" fill="#ffee00" stroke="#a09000" stroke-width="0.8"/><path d="M321.90 814.40 L323.91 819.23 L329.13 819.65 L325.15 823.06 L326.37 828.15 L321.90 825.42 L317.43 828.15 L318.65 823.06 L314.67 819.65 L319.89 819.23Z" fill="#f4f4f4" stroke="#d0d0d0" stroke-width="0.8"/><path d="M337.50 814.40 L339.51 819.23 L344.73 819.65 L340.75 823.06 L341.97 828.15 L337.50 825.42 L333.03 828.15 L334.25 823.06 L330.27 819.65 L335.49 819.23Z" fill="#f4f4f4" stroke="#d0d0d0" stroke-width="0.8"/><path d="M275.10 836.40 L277.11 841.23 L282.33 841.65 L278.35 845.06 L279.57 850.15 L275.10 847.42 L270.63 850.15 L271.85 845.06 L267.87 841.65 L273.09 841.23Z" fill="#ffee00" stroke="#a09000" stroke-width="0.8"/><path d="M290.70 836.40 L292.71 841.23 L297.93 841.65 L293.95 845.06 L295.17 850.15 L290.70 847.42 L286.23 850.15 L287.45 845.06 L283.47 841.65 L288.69 841.23Z" fill="#ffee00" stroke="#a09000" stroke-width="0.8"/><path d="M306.30 836.40 L308.31 841.23 L313.53 841.65 L309.55 845.06 L310.77 850.15 L306.30 847.42 L301.83 850.15 L303.05 845.06 L299.07 841.65 L304.29 841.23Z" fill="#ffee00" stroke="#a09000" stroke-width="0.8"/><path d="M321.90 836.40 L323.91 841.23 L329.13 841.65 L325.15 845.06 L326.37 850.15 L321.90 847.42 L317.43 850.15 L318.65 845.06 L314.67 841.65 L319.89 841.23Z" fill="#ffee00" stroke="#a09000" stroke-width="0.8"/><path d="M337.50 836.40 L339.51 841.23 L344.73 841.65 L340.75 845.06 L341.97 850.15 L337.50 847.42 L333.03 850.15 L334.25 845.06 L330.27 841.65 L335.49 841.23Z" fill="#ffee00" stroke="#a09000" stroke-width="0.8"/><path d="M275.10 858.40 L277.11 863.23 L282.33 863.65 L278.35 867.06 L279.57 872.15 L275.10 869.42 L270.63 872.15 L271.85 867.06 L267.87 863.65 L273.09 863.23Z" fill="#ffee00" stroke="#a09000" stroke-width="0.8"/><path d="M290.70 858.40 L292.71 863.23 L297.93 863.65 L293.95 867.06 L295.17 872.15 L290.70 869.42 L286.23 872.15 L287.45 867.06 L283.47 863.65 L288.69 863.23Z" fill="#ffee00" stroke="#a09000" stroke-width="0.8"/><path d="M306.30 858.40 L308.31 863.23 L313.53 863.65 L309.55 867.06 L310.77 872.15 L306.30 869.42 L301.83 872.15 L303.05 867.06 L299.07 863.65 L304.29 863.23Z" fill="#ffee00" stroke="#a09000" stroke-width="0.8"/><path d="M321.90 858.40 L323.91 863.23 L329.13 863.65 L325.15 867.06 L326.37 872.15 L321.90 869.42 L317.43 872.15 L318.65 867.06 L314.67 863.65 L319.89 863.23Z" fill="#ffee00" stroke="#a09000" stroke-width="0.8"/><path d="M337.50 858.40 L339.51 863.23 L344.73 863.65 L340.75 867.06 L341.97 872.15 L337.50 869.42 L333.03 872.15 L334.25 867.06 L330.27 863.65 L335.49 863.23Z" fill="#ffee00" stroke="#a09000" stroke-width="0.8"/></svg>
<div class="b" style="left:1102px;top:657px;width:6px;height:107px;background:#a8aaac;border-radius:3px;"></div>
<div class="b" style="left:10px;top:886px;width:879px;height:4px;background:#a8aaac;border-radius:2px;"></div>
<svg style="left:1120px;top:648px" width="480" height="252" viewBox="1120 648 480 252"><defs>
<radialGradient id="mg" gradientUnits="userSpaceOnUse" cx="1360" cy="760" r="260"><stop offset="0" stop-color="#213b80"/><stop offset="0.55" stop-color="#1d3473"/><stop offset="1" stop-color="#182b63"/></radialGradient>
<filter id="bl" x="-20%" y="-20%" width="140%" height="140%"><feGaussianBlur stdDeviation="2.2"/></filter>
<filter id="bl1"><feGaussianBlur stdDeviation="1"/></filter>
<filter id="tx" x="0" y="0" width="100%" height="100%"><feTurbulence type="fractalNoise" baseFrequency="0.06" numOctaves="3" seed="7"/>
<feColorMatrix type="matrix" values="0 0 0 0 0.05  0 0 0 0 0.08  0 0 0 0 0.22  0 0 0 -1.6 1.05"/></filter>
<filter id="tx2" x="0" y="0" width="100%" height="100%"><feTurbulence type="fractalNoise" baseFrequency="0.09" numOctaves="2" seed="3"/>
<feColorMatrix type="matrix" values="0 0 0 0 0.35  0 0 0 0 0.48  0 0 0 0 0.85  0 0 0 -1.8 1.0"/></filter>
</defs>
<filter id="relief" x="0" y="0" width="100%" height="100%" color-interpolation-filters="sRGB">
<feTurbulence type="fractalNoise" baseFrequency="0.035" numOctaves="3" seed="9" result="n"/>
<feDiffuseLighting in="n" surfaceScale="1.6" lighting-color="#ffffff" diffuseConstant="1" result="l"><feDistantLight azimuth="235" elevation="55"/></feDiffuseLighting>
<feColorMatrix in="l" type="matrix" values="0.10 0 0 0 0.035  0.16 0 0 0 0.06  0.30 0 0 0 0.16  0 0 0 0 1"/>
</filter>
<rect x="1120" y="648" width="480" height="252" fill="#203775"/>
<rect x="1120" y="648" width="480" height="252" filter="url(#relief)"/>
<radialGradient id="lz" gradientUnits="userSpaceOnUse" cx="1420" cy="715" r="150" gradientTransform="translate(1420 715) scale(1.3 0.7) translate(-1420 -715)"><stop offset="0" stop-color="#4a6cc0" stop-opacity="0.35"/><stop offset="1" stop-color="#4a6cc0" stop-opacity="0"/></radialGradient>
<filter id="relief2" x="0" y="0" width="100%" height="100%" color-interpolation-filters="sRGB">
<feTurbulence type="fractalNoise" baseFrequency="0.06" numOctaves="4" seed="21" result="n"/>
<feDiffuseLighting in="n" surfaceScale="3.5" lighting-color="#ffffff" diffuseConstant="1" result="l"><feDistantLight azimuth="250" elevation="50"/></feDiffuseLighting>
<feColorMatrix in="l" type="matrix" values="0.16 0 0 0 -0.02  0.24 0 0 0 -0.01  0.46 0 0 0 0.06  0 0 0 0 1"/>
</filter>
<radialGradient id="rmg" gradientUnits="userSpaceOnUse" cx="1430" cy="740" r="190"><stop offset="0" stop-color="#fff" stop-opacity="0.9"/><stop offset="0.6" stop-color="#fff" stop-opacity="0.5"/><stop offset="1" stop-color="#fff" stop-opacity="0"/></radialGradient>
<mask id="rm"><rect x="1120" y="648" width="480" height="252" fill="url(#rmg)"/></mask>
<rect x="1120" y="648" width="480" height="252" filter="url(#relief2)" mask="url(#rm)"/>
<rect x="1120" y="648" width="480" height="252" fill="url(#lz)"/>
<radialGradient id="lz2" gradientUnits="userSpaceOnUse" cx="1220" cy="690" r="110"><stop offset="0" stop-color="#0a1540" stop-opacity="0.25"/><stop offset="1" stop-color="#0a1540" stop-opacity="0"/></radialGradient>
<rect x="1120" y="648" width="480" height="252" fill="url(#lz2)"/>
<g filter="url(#bl1)" fill="none" stroke-linecap="round" stroke-linejoin="round">
<path d="M1120 740 Q1145 735 1167 733 Q1215 727 1254 722 Q1268 712 1278 700 Q1295 682 1309 668 Q1320 657 1330 648" stroke="#5070c0" stroke-width="3" opacity="0.4" transform="translate(1 3)"/>
<path d="M1120 740 Q1145 735 1167 733 Q1215 727 1254 722 Q1268 712 1278 700 Q1295 682 1309 668 Q1320 657 1330 648" stroke="#060e30" stroke-width="4" opacity="0.8"/>
<path d="M1167 721 Q1200 712 1230 703 Q1258 692 1278 680 Q1292 670 1302 660 L1310 648" stroke="#5070c0" stroke-width="2" opacity="0.3" transform="translate(1 2.5)"/>
<path d="M1167 721 Q1200 712 1230 703 Q1258 692 1278 680 Q1292 670 1302 660 L1310 648" stroke="#060e30" stroke-width="2.5" opacity="0.55"/>
<path d="M1120 760 Q1160 752 1200 748" stroke="#060e30" stroke-width="2" opacity="0.35"/>
<path d="M1318 900 Q1338 850 1360 800 Q1378 765 1392 735 Q1386 705 1382 690 Q1390 665 1398 648" stroke="#6080c8" stroke-width="4" opacity="0.4" transform="translate(-5 -2)"/>
<path d="M1318 900 Q1338 850 1360 800 Q1378 765 1392 735" stroke="#040a26" stroke-width="9" opacity="0.9"/>
<path d="M1392 735 Q1386 705 1382 690 Q1390 665 1398 648" stroke="#040a26" stroke-width="5" opacity="0.85"/>
<path d="M1392 738 Q1402 700 1410 660 L1412 648" stroke="#040a26" stroke-width="4.5" opacity="0.75"/>
<path d="M1345 900 Q1358 850 1372 812 Q1385 785 1395 770" stroke="#060e30" stroke-width="3.5" opacity="0.65"/>
<path d="M1300 892 Q1318 858 1338 826" stroke="#060e30" stroke-width="3" opacity="0.6"/>
<path d="M1282 900 Q1292 880 1305 862" stroke="#060e30" stroke-width="2.5" opacity="0.55"/>
<path d="M1404 655 Q1420 670 1430 690" stroke="#060e30" stroke-width="2.5" opacity="0.55"/>
<path d="M1430 770 Q1470 772 1500 762 Q1525 738 1536 715 Q1546 690 1552 665 L1558 648" stroke="#03081f" stroke-width="10" opacity="0.9"/>
<path d="M1436 754 Q1476 755 1500 744 Q1516 722 1526 700 Q1536 675 1542 648" stroke="#5a7ccc" stroke-width="5" opacity="0.5"/>
<path d="M1505 712 Q1522 680 1532 652" stroke="#6a8ad0" stroke-width="8" opacity="0.3"/>
<path d="M1390 900 Q1440 885 1500 872 Q1550 862 1600 852" stroke="#060e30" stroke-width="3.5" opacity="0.6"/>
<path d="M1420 810 Q1460 800 1510 805" stroke="#060e30" stroke-width="3" opacity="0.5"/>
<path d="M1430 700 Q1460 690 1490 676" stroke="#060e30" stroke-width="3" opacity="0.5"/>
<path d="M1450 670 Q1470 660 1480 648" stroke="#060e30" stroke-width="3" opacity="0.5"/>
<path d="M1540 790 Q1570 780 1600 770" stroke="#060e30" stroke-width="3" opacity="0.45"/>
<path d="M1200 830 Q1230 820 1260 830" stroke="#060e30" stroke-width="2.5" opacity="0.4"/>
<path d="M1330 712 Q1345 692 1360 682" stroke="#060e30" stroke-width="3" opacity="0.5"/>
<path d="M1280 790 Q1300 780 1315 770" stroke="#060e30" stroke-width="2.5" opacity="0.45"/>
<path d="M1250 900 Q1240 880 1220 870" stroke="#060e30" stroke-width="2.5" opacity="0.4"/>
<path d="M1440 740 Q1460 720 1480 715 M1450 725 Q1470 700 1500 700" stroke="#060e30" stroke-width="2.5" opacity="0.45"/>
</g>
<g>
<rect x="1130" y="658" width="40" height="40" fill="#f4f4f4"/>
<rect x="1131.5" y="659.5" width="37" height="37" fill="#ece6c4" stroke="#2a2a2a" stroke-width="1"/>
<path d="M1132 660 H1150 Q1148 664 1146 666 Q1142 670 1144 674 Q1146 678 1150 676 L1152 680 Q1148 682 1142 684 Q1138 686 1136 690 L1132 692Z" fill="#d6edf7"/>
<path d="M1150 660 H1160 Q1158 664 1154 666 Q1152 664 1150 660Z" fill="#d6edf7"/>
<path d="M1132 684 Q1138 686 1140 690 Q1136 692 1132 690Z" fill="#8cc8ec"/>
<path d="M1144 696 Q1146 690 1152 688 Q1156 687 1158 690 Q1162 694 1166 692 L1168 696Z" fill="#86c4ea"/>
<path d="M1134 668 Q1138 666 1140 670 Q1138 674 1134 673Z" fill="#ece6c4"/>
<rect x="1141" y="676" width="3" height="1" fill="#777"/><rect x="1150" y="670" width="3" height="1" fill="#777"/><rect x="1146" y="684" width="3" height="1" fill="#777"/><rect x="1158" y="678" width="3" height="1" fill="#777"/>
</g>
<rect x="1139.5" y="707.5" width="21" height="21" fill="#e2e2e2" stroke="#b8b8b8" stroke-width="1"/>
<path d="M1145 718 H1155 M1150 713 V723" stroke="#222" stroke-width="2"/>
<rect x="1139.5" y="737.5" width="21" height="21" fill="#e2e2e2" stroke="#b8b8b8" stroke-width="1"/>
<path d="M1145 748 H1155" stroke="#222" stroke-width="2"/>
<rect x="1557.5" y="657.5" width="33" height="33" fill="#e6e6e6" stroke="#111" stroke-width="1.2"/>
<rect x="1559.5" y="659.5" width="29" height="29" fill="none" stroke="#fff" stroke-width="1"/>
<path d="M1564 667.5 H1584 M1564 674 H1584 M1564 680.5 H1584" stroke="#111" stroke-width="2.2"/>
<g stroke-linejoin="round">
<path d="M1379 742 L1400.4 752 L1397 763.6 L1381 758Z" fill="#b80a0a" stroke="#9a9a9a" stroke-width="2.6"/>
<path d="M1379 742 L1400.4 752 L1397 763.6 L1381 758Z" fill="#c00c0c" stroke="#111" stroke-width="0.9"/>
<path d="M1384 750 L1397 762" stroke="#e8e8e8" stroke-width="2.2"/>
<path d="M1368 745 L1361 780" stroke="#9a9a9a" stroke-width="3.6" stroke-linecap="round"/>
<path d="M1368 745 L1361 780" stroke="#111" stroke-width="1.8" stroke-linecap="round"/>
<path d="M1368.5 748.8 L1389.7 753.3 L1386.7 773.3 L1366 767.5Z" fill="#e01010" stroke="#9a9a9a" stroke-width="2.6"/>
<path d="M1366.8 762 Q1376 762 1387.7 766.5 L1386.7 773.3 L1366 767.5Z" fill="#9a0808"/>
<path d="M1368.5 748.8 L1389.7 753.3 L1386.7 773.3 L1366 767.5Z" fill="none" stroke="#111" stroke-width="0.9"/>
<path d="M1369.5 750 L1386.5 765.5" stroke="#ffffff" stroke-width="2.6"/>
</g>
</svg>
<svg style="left:0;top:0" width="1600" height="900" viewBox="0 0 1600 900"><defs><linearGradient id="bg1" x1="0" y1="0" x2="0" y2="1"><stop offset="0" stop-color="#ececec"/><stop offset="1" stop-color="#d9d9d9"/></linearGradient></defs><rect x="484" y="169" width="34" height="34" rx="3" fill="#cbcccd"/><rect x="484" y="385" width="34" height="34" rx="3" fill="#cbcccd"/><rect x="490.5" y="68" width="23" height="23" fill="#c9c9c9" opacity="0.6"/><rect x="490" y="67" width="22.5" height="22.5" fill="url(#bg1)" stroke="#d2d2d2" stroke-width="0.6"/><line x1="491" y1="71.3" x2="509" y2="71.3" stroke="#d01f1f" stroke-width="1.1"/><path d="M499.6 73.3 Q501.2 73.5 500.9 75.2 L500.4 78.6 Q499.8 80.6 498.4 81.2 L498 84 L496.2 87.6 L495.2 87.2 L496.4 83.2 L496.2 80.2 Q496.6 77 498.2 75.4 Z" fill="#2c5aa8"/><path d="M498.4 81 L501.8 83.4 L506.9 82.8 L507 84.2 L501.6 85.2 L497.6 83Z" fill="#2c5aa8"/><path d="M505.1 77.6 L507.9 73.6 L510.8 77.6Z" fill="#2c5aa8"/><path d="M489 102 H513 V119.6 Q500 117.5 489 119.6Z" fill="#cfe3d4"/><path d="M489 102 H513 V114.5 Q506 113.5 500 115 Q494 116.3 489 115Z" fill="#a3c9ae"/><path d="M489 102 H513 V108.8 Q506 107.5 500 109.3 Q494 111 489 109.6Z" fill="#7db48e"/><path d="M489 102 H513 V104.6 Q506 103.6 500 105.6 Q494 107.2 489 105.6Z" fill="#5a9e70"/><rect x="490.5" y="140" width="23" height="23" fill="#c9c9c9" opacity="0.6"/><rect x="490" y="139" width="22.5" height="22.5" fill="url(#bg1)" stroke="#d2d2d2" stroke-width="0.6"/><line x1="493" y1="142.5" x2="509" y2="142.5" stroke="#d01f1f" stroke-width="1.2"/><path d="M493 147.5 H499.5 V154 H504.5 V160" stroke="#7b8a2a" stroke-width="1.3" fill="none"/><path d="M503 152 L506 146 L509 152Z" fill="#7b8a2a"/><rect x="490.5" y="176" width="23" height="23" fill="#c9c9c9" opacity="0.6"/><rect x="490" y="175" width="22.5" height="22.5" fill="url(#bg1)" stroke="#d2d2d2" stroke-width="0.6"/><line x1="493" y1="178.5" x2="509" y2="178.5" stroke="#d01f1f" stroke-width="1.2"/><path d="M506 183 L509 178.5 L511 183Z" fill="#8a1a9a"/><rect x="495.5" y="185.5" width="12" height="10" fill="none" stroke="#8a1a9a" stroke-width="1.6"/><rect x="492" y="188.5" width="3" height="4" fill="#8a1a9a"/><rect x="508" y="188.5" width="3" height="4" fill="#8a1a9a"/><path d="M500 187.5 V191 H503" stroke="#8a1a9a" stroke-width="1" fill="none"/><rect x="490.5" y="212.5" width="23" height="23" fill="#c9c9c9" opacity="0.6"/><rect x="490" y="211.5" width="22.5" height="22.5" fill="url(#bg1)" stroke="#d2d2d2" stroke-width="0.6"/><text x="501.5" y="227.5" text-anchor="middle" font-family="Liberation Sans" font-weight="bold" font-size="13" fill="#d04a1a">He</text><rect x="490.5" y="248.5" width="23" height="23" fill="#c9c9c9" opacity="0.6"/><rect x="490" y="247.5" width="22.5" height="22.5" fill="url(#bg1)" stroke="#d2d2d2" stroke-width="0.6"/><text x="495" y="263.5" font-family="Liberation Sans" font-weight="bold" font-size="13" fill="#111111">N</text><text x="504.5" y="265.5" font-family="Liberation Sans" font-weight="bold" font-size="8" fill="#111111">2</text><rect x="490.5" y="284.5" width="23" height="23" fill="#c9c9c9" opacity="0.6"/><rect x="490" y="283.5" width="22.5" height="22.5" fill="url(#bg1)" stroke="#d2d2d2" stroke-width="0.6"/><text x="495" y="299.5" font-family="Liberation Sans" font-weight="bold" font-size="13" fill="#6a9a2a">O</text><text x="504.5" y="301.5" font-family="Liberation Sans" font-weight="bold" font-size="8" fill="#6a9a2a">2</text><path d="M492 322 V337 H510.5 V322" stroke="#111" stroke-width="2" fill="none"/><path d="M497 334.5 L501.2 324 L505.5 334.5Z" stroke="#111" stroke-width="1.4" fill="none"/><circle cx="492" cy="337" r="1.4" fill="#e00"/><circle cx="510.5" cy="337" r="1.4" fill="#e00"/><path d="M491.5 370.5 L498.5 363.5 L502 367.5 L509.5 362" stroke="#111" stroke-width="2.4" fill="none"/><circle cx="491.5" cy="370.5" r="1.6" fill="#111"/><circle cx="509" cy="362" r="1.6" fill="#111"/><circle cx="498" cy="364" r="1.3" fill="#111"/><circle cx="502" cy="368" r="1.3" fill="#111"/><path d="M490 393 H507.5 L512.5 398 V410 H490Z" fill="#6f9fd8" stroke="#8a8a8a" stroke-width="0.6"/><path d="M498 399 Q503 397 507 401 Q509 404 506 407 Q500 409 497 405Z" fill="#dde8f4" opacity="0.9"/><path d="M512.5 403 L505 410 H512.5Z" fill="#f4f4f4"/><path d="M505 410 L507 404 L512.5 403" fill="#ccc" stroke="#999" stroke-width="0.4"/><circle cx="494" cy="396" r="2.6" fill="#9a2a70"/><circle cx="495.8" cy="395.4" r="1.8" fill="#e0a020"/><path d="M493 398.5 L494.3 401.5 L495.5 398.5" stroke="#555" stroke-width="0.5" fill="none"/><path d="M507.5 393 L512.5 398 H507.5Z" fill="#f0f0f0"/><path d="M498 434 Q498 430 503 430 Q507 430 507 434 L507 447 L497 447Z" fill="#8c8c8c"/><rect x="501" y="426.5" width="3" height="4" fill="#555"/><path d="M500 440 Q504 435 509 438 M509 441 Q505 447 500 444" stroke="#3a7ad8" stroke-width="2.2" fill="none"/><rect x="490.5" y="464" width="23" height="23" fill="#c9c9c9" opacity="0.6"/><rect x="490" y="463" width="22.5" height="22.5" fill="url(#bg1)" stroke="#d2d2d2" stroke-width="0.6"/><path d="M498 468 H504 M501 465.5 V470.5" stroke="#d03a1a" stroke-width="1.3"/><line x1="492" y1="472" x2="510" y2="472" stroke="#999" stroke-width="0.6"/><text x="501.2" y="481.5" text-anchor="middle" font-family="Liberation Sans" font-weight="bold" font-size="8.5" fill="#333">MOD</text><rect x="490.5" y="499.5" width="23" height="23" fill="#c9c9c9" opacity="0.6"/><rect x="490" y="498.5" width="22.5" height="22.5" fill="url(#bg1)" stroke="#d2d2d2" stroke-width="0.6"/><path d="M495 506 L497.5 504 L500 507 L498 511 L501 514 L503 515 M498 511 L495 516 M497 508 L494 510" stroke="#2a53b0" stroke-width="2" fill="none" stroke-linecap="round"/><circle cx="497" cy="503" r="1.4" fill="#2a53b0"/><circle cx="506.5" cy="505" r="3.8" fill="none" stroke="#3a9a3a" stroke-width="1.1"/><path d="M506.5 502.5 V505 H508.5" stroke="#3a9a3a" stroke-width="0.9" fill="none"/><line x1="492" y1="518.5" x2="510.5" y2="518.5" stroke="#d01f1f" stroke-width="1.2"/><rect x="490.5" y="536" width="23" height="23" fill="#c9c9c9" opacity="0.6"/><rect x="490" y="535" width="22.5" height="22.5" fill="url(#bg1)" stroke="#d2d2d2" stroke-width="0.6"/><path d="M498 539.5 H504 M501 537 V542" stroke="#d03a1a" stroke-width="1.3"/><text x="501.2" y="550" text-anchor="middle" font-family="Liberation Sans" font-weight="bold" font-size="8.5" fill="#333">EAD</text><text x="501.2" y="555.5" text-anchor="middle" font-family="Liberation Sans" font-weight="bold" font-size="5.5" fill="#333">(•••)</text><rect x="490.5" y="572" width="23" height="23" fill="#c9c9c9" opacity="0.6"/><rect x="490" y="571" width="22.5" height="22.5" fill="url(#bg1)" stroke="#d2d2d2" stroke-width="0.6"/><text x="501.2" y="578.5" text-anchor="middle" font-family="Liberation Sans" font-weight="bold" font-size="6.5" fill="#3a8a3a">SAC</text><rect x="493.5" y="581" width="6" height="9" fill="none" stroke="#333" stroke-width="1"/><path d="M494 584 H499 M494 587 H499" stroke="#3a8a3a" stroke-width="1"/><circle cx="505.5" cy="586" r="4" fill="none" stroke="#3a9a3a" stroke-width="1.1"/><path d="M505.5 583.5 V586 H507.5" stroke="#3a9a3a" stroke-width="0.9" fill="none"/><path d="M494.5 628.5 L501.3 635.3 L508 628.5" stroke="#31363b" stroke-width="1.6" fill="none"/></svg>
</body></html>
